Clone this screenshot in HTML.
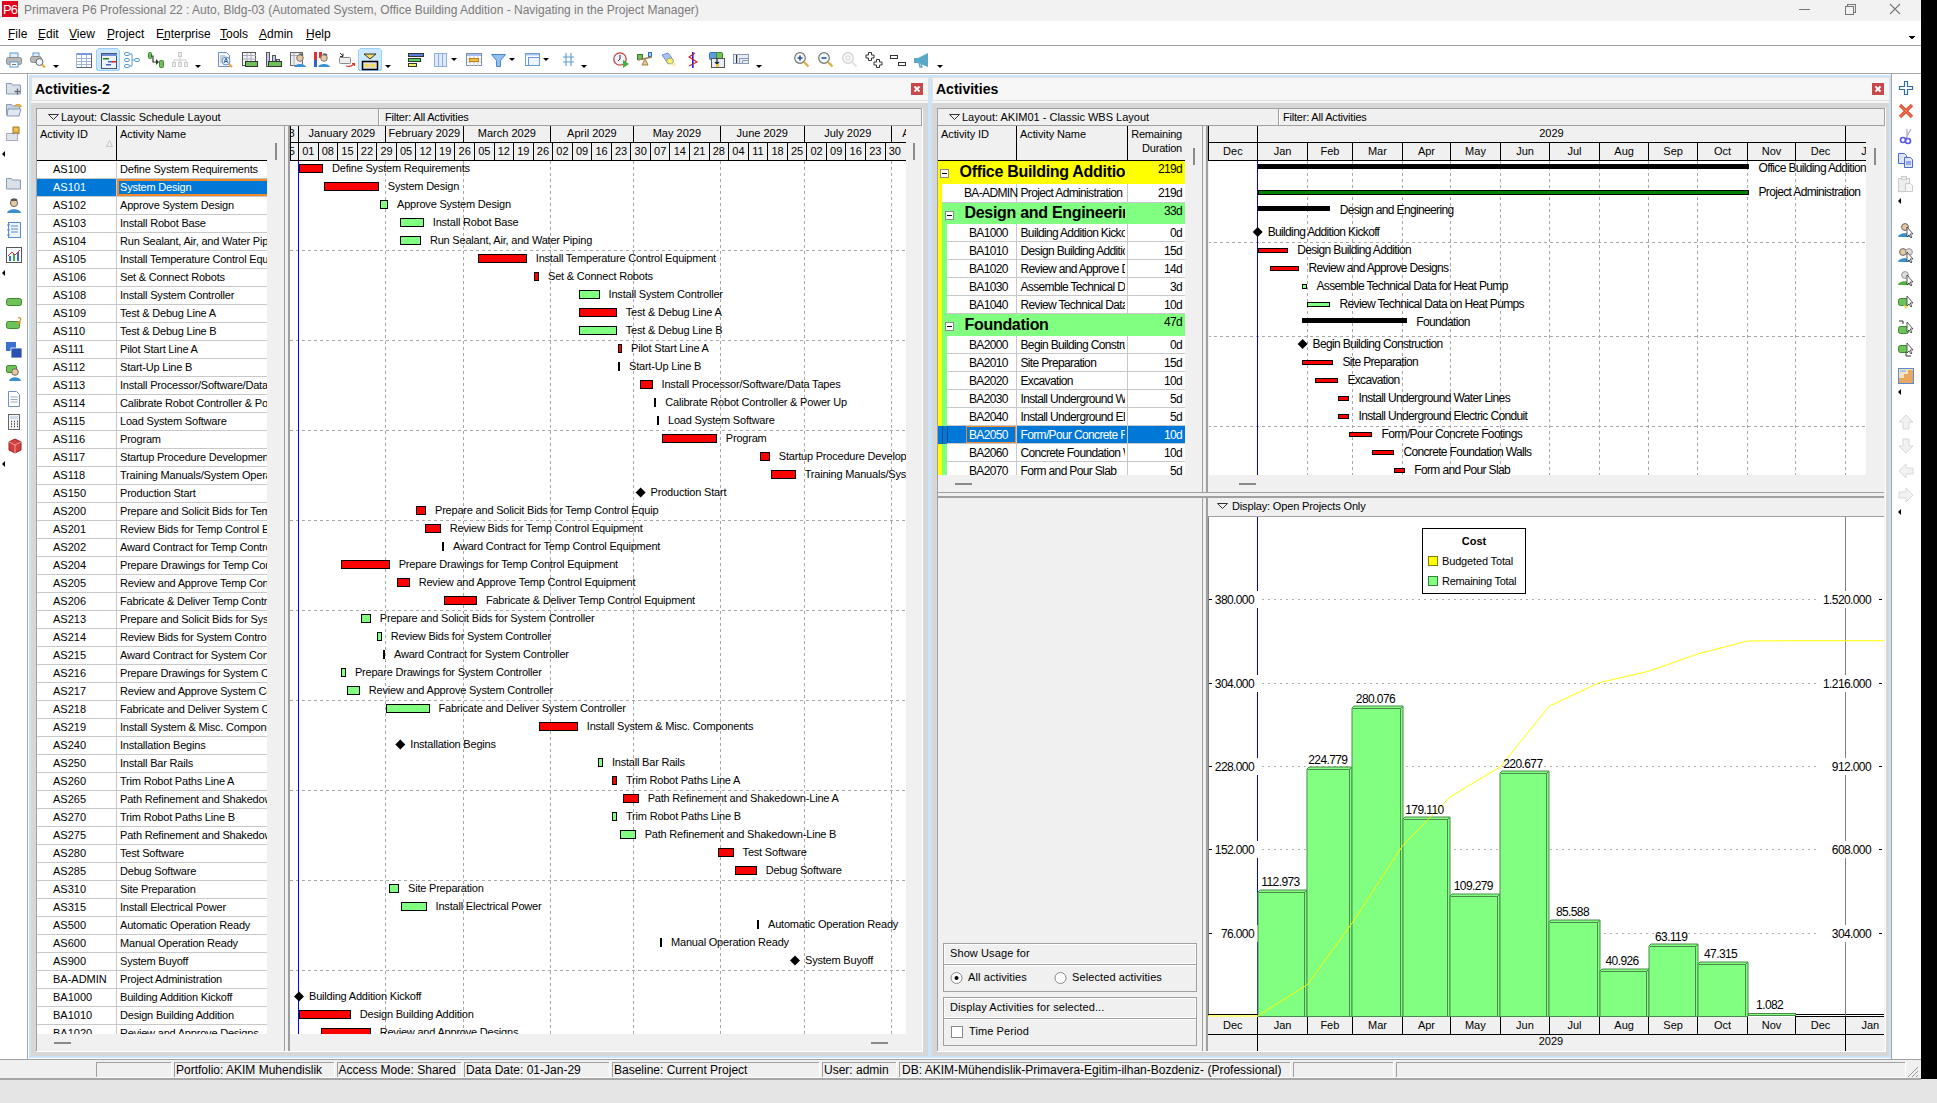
<!DOCTYPE html><html><head><meta charset="utf-8"><title>Primavera P6</title><style>
html,body{margin:0;padding:0;width:1937px;height:1103px;overflow:hidden;background:#e6e6e6;}
.lay{position:absolute;overflow:hidden;}
.lay svg{position:absolute;left:0;top:0;}
.t{position:absolute;white-space:nowrap;font-family:"Liberation Sans",sans-serif;color:#000;}
</style></head><body>
<div class="lay" style="left:0px;top:0px;width:1937px;height:1103px">
<svg width="1937" height="1103" viewBox="0 0 1937 1103" shape-rendering="crispEdges"><rect x="0" y="0" width="1937" height="1103" fill="#e6e6e6" /><rect x="1921" y="0" width="16" height="1079" fill="#000" /><rect x="0" y="0" width="1921" height="21" fill="#f2f2f2" /><rect x="0" y="21" width="1921" height="52" fill="#ffffff" /><rect x="0" y="45" width="1921" height="1" fill="#a6a6a6" /><rect x="0" y="73" width="1921" height="1" fill="#a6a6a6" /><rect x="0" y="74" width="1921" height="985" fill="#ffffff" /><rect x="27" y="74" width="1" height="985" fill="#a6a6a6" /><rect x="1891" y="74" width="1" height="985" fill="#a6a6a6" /><rect x="0" y="1059" width="1921" height="20" fill="#f0f0f0" /><rect x="0" y="1078" width="1921" height="2" fill="#a6a6a6" /><rect x="0" y="1080" width="1937" height="23" fill="#e5e5e5" /><rect x="2" y="1" width="16" height="16" fill="#e2001a" /><rect x="1799" y="9" width="11" height="1" fill="#777" /><path d="M1845.5 6.5 h8 v8 h-8 z M1847.5 6.5 v-2 h8 v8 h-2" fill="none" stroke="#777" stroke-width="1"/><path d="M1890 4 L1900 14 M1900 4 L1890 14" stroke="#777" stroke-width="1.1" shape-rendering="auto"/><rect x="8" y="39" width="6" height="1" fill="#000" /><rect x="38" y="39" width="6" height="1" fill="#000" /><rect x="70" y="39" width="7" height="1" fill="#000" /><rect x="107" y="39" width="7" height="1" fill="#000" /><rect x="163" y="39" width="6" height="1" fill="#000" /><rect x="220" y="39" width="7" height="1" fill="#000" /><rect x="259" y="39" width="7" height="1" fill="#000" /><rect x="306" y="39" width="7" height="1" fill="#000" /><path d="M1908 36 h7 l-3.5 3.5 z" fill="#000"/><rect x="30" y="76" width="899" height="981" fill="#f7f7f7" stroke="#cce4f9" stroke-width="2"/><rect x="31" y="77" width="897" height="23" fill="#f7f7f7" stroke="#e1e1e1" stroke-width="1" /><rect x="31" y="103" width="897" height="953" fill="#d7d7d7" /><rect x="911" y="83" width="12" height="12" fill="#c9484b" /><path d="M914.5 86.5 L919.5 91.5 M919.5 86.5 L914.5 91.5" stroke="#fff" stroke-width="1.8" shape-rendering="auto"/><rect x="931" y="76" width="959" height="981" fill="#f7f7f7" stroke="#cce4f9" stroke-width="2"/><rect x="932" y="77" width="957" height="23" fill="#f7f7f7" stroke="#e1e1e1" stroke-width="1" /><rect x="932" y="103" width="957" height="953" fill="#d7d7d7" /><rect x="1872" y="83" width="12" height="12" fill="#c9484b" /><path d="M1875.5 86.5 L1880.5 91.5 M1880.5 86.5 L1875.5 91.5" stroke="#fff" stroke-width="1.8" shape-rendering="auto"/><rect x="36" y="108" width="887" height="944" fill="#f0f0f0" /><rect x="36" y="108" width="886" height="1" fill="#a0a0a0" /><rect x="36" y="108" width="1" height="943" fill="#a0a0a0" /><rect x="922" y="108" width="1" height="944" fill="#ffffff" /><rect x="36" y="1051" width="887" height="1" fill="#ffffff" /><rect x="37" y="125" width="885" height="1" fill="#a0a0a0" /><rect x="378" y="109" width="1" height="16" fill="#a0a0a0" /><rect x="379" y="109" width="1" height="16" fill="#fff" /><rect x="921" y="108" width="1" height="18" fill="#a0a0a0" /><path d="M48.5 114.5 h10 L53.5 119.5 Z" fill="none" stroke="#333" stroke-width="1" shape-rendering="auto"/><rect x="37" y="126" width="230" height="34" fill="#f0f0f0" /><rect x="37" y="160" width="230" height="1" fill="#000" /><rect x="116" y="126" width="1" height="34" fill="#000" /><path d="M106.5 146.5 L109.5 140.5 L112.5 146.5 Z" fill="none" stroke="#c8c8c8" stroke-width="1" shape-rendering="auto"/><rect x="267" y="126" width="17" height="908" fill="#f0f0f0" /><rect x="275" y="143" width="2" height="17" fill="#8a8a8a" /><rect x="906" y="126" width="16" height="925" fill="#f0f0f0" /><rect x="913" y="143" width="2" height="17" fill="#8a8a8a" /><rect x="284" y="126" width="1" height="925" fill="#a0a0a0" /><rect x="285" y="126" width="3" height="925" fill="#f0f0f0" /><rect x="288" y="126" width="2" height="925" fill="#a0a0a0" /><rect x="37" y="1034" width="247" height="17" fill="#f0f0f0" /><rect x="290" y="1034" width="632" height="17" fill="#f0f0f0" /><rect x="54" y="1042" width="17" height="2" fill="#8a8a8a" /><rect x="871" y="1042" width="17" height="2" fill="#8a8a8a" /></svg>
<div class="t" style="top:1.70px;font-size:13px;line-height:16px;left:3.00px;color:#fff;letter-spacing:-0.8px;">P6</div>
<div class="t" style="top:2.70px;font-size:12px;line-height:15px;left:24.00px;color:#7b7b7b;">Primavera P6 Professional 22 : Auto, Bldg-03 (Automated System, Office Building Addition - Navigating in the Project Manager)</div>
<div class="t" style="top:26.70px;font-size:12px;line-height:15px;left:8.00px;">File</div>
<div class="t" style="top:26.70px;font-size:12px;line-height:15px;left:38.00px;">Edit</div>
<div class="t" style="top:26.70px;font-size:12px;line-height:15px;left:69.00px;">View</div>
<div class="t" style="top:26.70px;font-size:12px;line-height:15px;left:107.00px;">Project</div>
<div class="t" style="top:26.70px;font-size:12px;line-height:15px;left:156.00px;">Enterprise</div>
<div class="t" style="top:26.70px;font-size:12px;line-height:15px;left:220.00px;">Tools</div>
<div class="t" style="top:26.70px;font-size:12px;line-height:15px;left:259.00px;">Admin</div>
<div class="t" style="top:26.70px;font-size:12px;line-height:15px;left:306.00px;">Help</div>
<div class="t" style="top:80.20px;font-size:14px;line-height:18px;left:35.00px;font-weight:700;">Activities-2</div>
<div class="t" style="top:80.20px;font-size:14px;line-height:18px;left:936.00px;font-weight:700;">Activities</div>
<div class="t" style="top:110.20px;font-size:11px;line-height:14px;left:61.00px;">Layout: Classic Schedule Layout</div>
<div class="t" style="top:110.20px;font-size:11px;line-height:14px;left:385.00px;letter-spacing:-0.2px;">Filter: All Activities</div>
<div class="t" style="top:127.20px;font-size:11px;line-height:14px;left:40.00px;letter-spacing:-0.1px;">Activity ID</div>
<div class="t" style="top:127.20px;font-size:11px;line-height:14px;left:120.00px;letter-spacing:-0.1px;">Activity Name</div>
</div>
<div class="lay" style="left:37px;top:161px;width:230px;height:873px">
<svg width="230" height="873" viewBox="37 161 230 873" shape-rendering="crispEdges"><rect x="37" y="161" width="230" height="873" fill="#ffffff" /><rect x="37" y="178" width="230" height="1" fill="#c8c8c8" /><rect x="116" y="161" width="1" height="18" fill="#c8c8c8" /><rect x="37" y="179" width="230" height="17" fill="#0078d7" /><rect x="117.8" y="179.8" width="150" height="15.4" fill="none" stroke="#f0892a" stroke-width="1.6"/><rect x="37" y="196" width="230" height="1" fill="#c8c8c8" /><rect x="116" y="179" width="1" height="18" fill="#c8c8c8" /><rect x="37" y="214" width="230" height="1" fill="#c8c8c8" /><rect x="116" y="197" width="1" height="18" fill="#c8c8c8" /><rect x="37" y="232" width="230" height="1" fill="#c8c8c8" /><rect x="116" y="215" width="1" height="18" fill="#c8c8c8" /><rect x="37" y="250" width="230" height="1" fill="#c8c8c8" /><rect x="116" y="233" width="1" height="18" fill="#c8c8c8" /><rect x="37" y="268" width="230" height="1" fill="#c8c8c8" /><rect x="116" y="251" width="1" height="18" fill="#c8c8c8" /><rect x="37" y="286" width="230" height="1" fill="#c8c8c8" /><rect x="116" y="269" width="1" height="18" fill="#c8c8c8" /><rect x="37" y="304" width="230" height="1" fill="#c8c8c8" /><rect x="116" y="287" width="1" height="18" fill="#c8c8c8" /><rect x="37" y="322" width="230" height="1" fill="#c8c8c8" /><rect x="116" y="305" width="1" height="18" fill="#c8c8c8" /><rect x="37" y="340" width="230" height="1" fill="#c8c8c8" /><rect x="116" y="323" width="1" height="18" fill="#c8c8c8" /><rect x="37" y="358" width="230" height="1" fill="#c8c8c8" /><rect x="116" y="341" width="1" height="18" fill="#c8c8c8" /><rect x="37" y="376" width="230" height="1" fill="#c8c8c8" /><rect x="116" y="359" width="1" height="18" fill="#c8c8c8" /><rect x="37" y="394" width="230" height="1" fill="#c8c8c8" /><rect x="116" y="377" width="1" height="18" fill="#c8c8c8" /><rect x="37" y="412" width="230" height="1" fill="#c8c8c8" /><rect x="116" y="395" width="1" height="18" fill="#c8c8c8" /><rect x="37" y="430" width="230" height="1" fill="#c8c8c8" /><rect x="116" y="413" width="1" height="18" fill="#c8c8c8" /><rect x="37" y="448" width="230" height="1" fill="#c8c8c8" /><rect x="116" y="431" width="1" height="18" fill="#c8c8c8" /><rect x="37" y="466" width="230" height="1" fill="#c8c8c8" /><rect x="116" y="449" width="1" height="18" fill="#c8c8c8" /><rect x="37" y="484" width="230" height="1" fill="#c8c8c8" /><rect x="116" y="467" width="1" height="18" fill="#c8c8c8" /><rect x="37" y="502" width="230" height="1" fill="#c8c8c8" /><rect x="116" y="485" width="1" height="18" fill="#c8c8c8" /><rect x="37" y="520" width="230" height="1" fill="#c8c8c8" /><rect x="116" y="503" width="1" height="18" fill="#c8c8c8" /><rect x="37" y="538" width="230" height="1" fill="#c8c8c8" /><rect x="116" y="521" width="1" height="18" fill="#c8c8c8" /><rect x="37" y="556" width="230" height="1" fill="#c8c8c8" /><rect x="116" y="539" width="1" height="18" fill="#c8c8c8" /><rect x="37" y="574" width="230" height="1" fill="#c8c8c8" /><rect x="116" y="557" width="1" height="18" fill="#c8c8c8" /><rect x="37" y="592" width="230" height="1" fill="#c8c8c8" /><rect x="116" y="575" width="1" height="18" fill="#c8c8c8" /><rect x="37" y="610" width="230" height="1" fill="#c8c8c8" /><rect x="116" y="593" width="1" height="18" fill="#c8c8c8" /><rect x="37" y="628" width="230" height="1" fill="#c8c8c8" /><rect x="116" y="611" width="1" height="18" fill="#c8c8c8" /><rect x="37" y="646" width="230" height="1" fill="#c8c8c8" /><rect x="116" y="629" width="1" height="18" fill="#c8c8c8" /><rect x="37" y="664" width="230" height="1" fill="#c8c8c8" /><rect x="116" y="647" width="1" height="18" fill="#c8c8c8" /><rect x="37" y="682" width="230" height="1" fill="#c8c8c8" /><rect x="116" y="665" width="1" height="18" fill="#c8c8c8" /><rect x="37" y="700" width="230" height="1" fill="#c8c8c8" /><rect x="116" y="683" width="1" height="18" fill="#c8c8c8" /><rect x="37" y="718" width="230" height="1" fill="#c8c8c8" /><rect x="116" y="701" width="1" height="18" fill="#c8c8c8" /><rect x="37" y="736" width="230" height="1" fill="#c8c8c8" /><rect x="116" y="719" width="1" height="18" fill="#c8c8c8" /><rect x="37" y="754" width="230" height="1" fill="#c8c8c8" /><rect x="116" y="737" width="1" height="18" fill="#c8c8c8" /><rect x="37" y="772" width="230" height="1" fill="#c8c8c8" /><rect x="116" y="755" width="1" height="18" fill="#c8c8c8" /><rect x="37" y="790" width="230" height="1" fill="#c8c8c8" /><rect x="116" y="773" width="1" height="18" fill="#c8c8c8" /><rect x="37" y="808" width="230" height="1" fill="#c8c8c8" /><rect x="116" y="791" width="1" height="18" fill="#c8c8c8" /><rect x="37" y="826" width="230" height="1" fill="#c8c8c8" /><rect x="116" y="809" width="1" height="18" fill="#c8c8c8" /><rect x="37" y="844" width="230" height="1" fill="#c8c8c8" /><rect x="116" y="827" width="1" height="18" fill="#c8c8c8" /><rect x="37" y="862" width="230" height="1" fill="#c8c8c8" /><rect x="116" y="845" width="1" height="18" fill="#c8c8c8" /><rect x="37" y="880" width="230" height="1" fill="#c8c8c8" /><rect x="116" y="863" width="1" height="18" fill="#c8c8c8" /><rect x="37" y="898" width="230" height="1" fill="#c8c8c8" /><rect x="116" y="881" width="1" height="18" fill="#c8c8c8" /><rect x="37" y="916" width="230" height="1" fill="#c8c8c8" /><rect x="116" y="899" width="1" height="18" fill="#c8c8c8" /><rect x="37" y="934" width="230" height="1" fill="#c8c8c8" /><rect x="116" y="917" width="1" height="18" fill="#c8c8c8" /><rect x="37" y="952" width="230" height="1" fill="#c8c8c8" /><rect x="116" y="935" width="1" height="18" fill="#c8c8c8" /><rect x="37" y="970" width="230" height="1" fill="#c8c8c8" /><rect x="116" y="953" width="1" height="18" fill="#c8c8c8" /><rect x="37" y="988" width="230" height="1" fill="#c8c8c8" /><rect x="116" y="971" width="1" height="18" fill="#c8c8c8" /><rect x="37" y="1006" width="230" height="1" fill="#c8c8c8" /><rect x="116" y="989" width="1" height="18" fill="#c8c8c8" /><rect x="37" y="1024" width="230" height="1" fill="#c8c8c8" /><rect x="116" y="1007" width="1" height="18" fill="#c8c8c8" /><rect x="37" y="1042" width="230" height="1" fill="#c8c8c8" /><rect x="116" y="1025" width="1" height="18" fill="#c8c8c8" /></svg>
<div class="t" style="top:0.70px;font-size:11px;line-height:14px;left:16.00px;">AS100</div>
<div class="t" style="top:0.70px;font-size:11px;line-height:14px;left:83.00px;letter-spacing:-0.2px;">Define System Requirements</div>
<div class="t" style="top:18.70px;font-size:11px;line-height:14px;left:16.00px;color:#fff;">AS101</div>
<div class="t" style="top:18.70px;font-size:11px;line-height:14px;left:83.00px;color:#fff;letter-spacing:-0.2px;">System Design</div>
<div class="t" style="top:36.70px;font-size:11px;line-height:14px;left:16.00px;">AS102</div>
<div class="t" style="top:36.70px;font-size:11px;line-height:14px;left:83.00px;letter-spacing:-0.2px;">Approve System Design</div>
<div class="t" style="top:54.70px;font-size:11px;line-height:14px;left:16.00px;">AS103</div>
<div class="t" style="top:54.70px;font-size:11px;line-height:14px;left:83.00px;letter-spacing:-0.2px;">Install Robot Base</div>
<div class="t" style="top:72.70px;font-size:11px;line-height:14px;left:16.00px;">AS104</div>
<div class="t" style="top:72.70px;font-size:11px;line-height:14px;left:83.00px;letter-spacing:-0.2px;">Run Sealant, Air, and Water Piping</div>
<div class="t" style="top:90.70px;font-size:11px;line-height:14px;left:16.00px;">AS105</div>
<div class="t" style="top:90.70px;font-size:11px;line-height:14px;left:83.00px;letter-spacing:-0.2px;">Install Temperature Control Equipment</div>
<div class="t" style="top:108.70px;font-size:11px;line-height:14px;left:16.00px;">AS106</div>
<div class="t" style="top:108.70px;font-size:11px;line-height:14px;left:83.00px;letter-spacing:-0.2px;">Set &amp; Connect Robots</div>
<div class="t" style="top:126.70px;font-size:11px;line-height:14px;left:16.00px;">AS108</div>
<div class="t" style="top:126.70px;font-size:11px;line-height:14px;left:83.00px;letter-spacing:-0.2px;">Install System Controller</div>
<div class="t" style="top:144.70px;font-size:11px;line-height:14px;left:16.00px;">AS109</div>
<div class="t" style="top:144.70px;font-size:11px;line-height:14px;left:83.00px;letter-spacing:-0.2px;">Test &amp; Debug Line A</div>
<div class="t" style="top:162.70px;font-size:11px;line-height:14px;left:16.00px;">AS110</div>
<div class="t" style="top:162.70px;font-size:11px;line-height:14px;left:83.00px;letter-spacing:-0.2px;">Test &amp; Debug Line B</div>
<div class="t" style="top:180.70px;font-size:11px;line-height:14px;left:16.00px;">AS111</div>
<div class="t" style="top:180.70px;font-size:11px;line-height:14px;left:83.00px;letter-spacing:-0.2px;">Pilot Start Line A</div>
<div class="t" style="top:198.70px;font-size:11px;line-height:14px;left:16.00px;">AS112</div>
<div class="t" style="top:198.70px;font-size:11px;line-height:14px;left:83.00px;letter-spacing:-0.2px;">Start-Up Line B</div>
<div class="t" style="top:216.70px;font-size:11px;line-height:14px;left:16.00px;">AS113</div>
<div class="t" style="top:216.70px;font-size:11px;line-height:14px;left:83.00px;letter-spacing:-0.2px;">Install Processor/Software/Data Tapes</div>
<div class="t" style="top:234.70px;font-size:11px;line-height:14px;left:16.00px;">AS114</div>
<div class="t" style="top:234.70px;font-size:11px;line-height:14px;left:83.00px;letter-spacing:-0.2px;">Calibrate Robot Controller &amp; Power Up</div>
<div class="t" style="top:252.70px;font-size:11px;line-height:14px;left:16.00px;">AS115</div>
<div class="t" style="top:252.70px;font-size:11px;line-height:14px;left:83.00px;letter-spacing:-0.2px;">Load System Software</div>
<div class="t" style="top:270.70px;font-size:11px;line-height:14px;left:16.00px;">AS116</div>
<div class="t" style="top:270.70px;font-size:11px;line-height:14px;left:83.00px;letter-spacing:-0.2px;">Program</div>
<div class="t" style="top:288.70px;font-size:11px;line-height:14px;left:16.00px;">AS117</div>
<div class="t" style="top:288.70px;font-size:11px;line-height:14px;left:83.00px;letter-spacing:-0.2px;">Startup Procedure Development</div>
<div class="t" style="top:306.70px;font-size:11px;line-height:14px;left:16.00px;">AS118</div>
<div class="t" style="top:306.70px;font-size:11px;line-height:14px;left:83.00px;letter-spacing:-0.2px;">Training Manuals/System Operation</div>
<div class="t" style="top:324.70px;font-size:11px;line-height:14px;left:16.00px;">AS150</div>
<div class="t" style="top:324.70px;font-size:11px;line-height:14px;left:83.00px;letter-spacing:-0.2px;">Production Start</div>
<div class="t" style="top:342.70px;font-size:11px;line-height:14px;left:16.00px;">AS200</div>
<div class="t" style="top:342.70px;font-size:11px;line-height:14px;left:83.00px;letter-spacing:-0.2px;">Prepare and Solicit Bids for Temp Control Equip</div>
<div class="t" style="top:360.70px;font-size:11px;line-height:14px;left:16.00px;">AS201</div>
<div class="t" style="top:360.70px;font-size:11px;line-height:14px;left:83.00px;letter-spacing:-0.2px;">Review Bids for Temp Control Equipment</div>
<div class="t" style="top:378.70px;font-size:11px;line-height:14px;left:16.00px;">AS202</div>
<div class="t" style="top:378.70px;font-size:11px;line-height:14px;left:83.00px;letter-spacing:-0.2px;">Award Contract for Temp Control Equipment</div>
<div class="t" style="top:396.70px;font-size:11px;line-height:14px;left:16.00px;">AS204</div>
<div class="t" style="top:396.70px;font-size:11px;line-height:14px;left:83.00px;letter-spacing:-0.2px;">Prepare Drawings for Temp Control Equipment</div>
<div class="t" style="top:414.70px;font-size:11px;line-height:14px;left:16.00px;">AS205</div>
<div class="t" style="top:414.70px;font-size:11px;line-height:14px;left:83.00px;letter-spacing:-0.2px;">Review and Approve Temp Control Equipment</div>
<div class="t" style="top:432.70px;font-size:11px;line-height:14px;left:16.00px;">AS206</div>
<div class="t" style="top:432.70px;font-size:11px;line-height:14px;left:83.00px;letter-spacing:-0.2px;">Fabricate &amp; Deliver Temp Control Equipment</div>
<div class="t" style="top:450.70px;font-size:11px;line-height:14px;left:16.00px;">AS213</div>
<div class="t" style="top:450.70px;font-size:11px;line-height:14px;left:83.00px;letter-spacing:-0.2px;">Prepare and Solicit Bids for System Controller</div>
<div class="t" style="top:468.70px;font-size:11px;line-height:14px;left:16.00px;">AS214</div>
<div class="t" style="top:468.70px;font-size:11px;line-height:14px;left:83.00px;letter-spacing:-0.2px;">Review Bids for System Controller</div>
<div class="t" style="top:486.70px;font-size:11px;line-height:14px;left:16.00px;">AS215</div>
<div class="t" style="top:486.70px;font-size:11px;line-height:14px;left:83.00px;letter-spacing:-0.2px;">Award Contract for System Controller</div>
<div class="t" style="top:504.70px;font-size:11px;line-height:14px;left:16.00px;">AS216</div>
<div class="t" style="top:504.70px;font-size:11px;line-height:14px;left:83.00px;letter-spacing:-0.2px;">Prepare Drawings for System Controller</div>
<div class="t" style="top:522.70px;font-size:11px;line-height:14px;left:16.00px;">AS217</div>
<div class="t" style="top:522.70px;font-size:11px;line-height:14px;left:83.00px;letter-spacing:-0.2px;">Review and Approve System Controller</div>
<div class="t" style="top:540.70px;font-size:11px;line-height:14px;left:16.00px;">AS218</div>
<div class="t" style="top:540.70px;font-size:11px;line-height:14px;left:83.00px;letter-spacing:-0.2px;">Fabricate and Deliver System Controller</div>
<div class="t" style="top:558.70px;font-size:11px;line-height:14px;left:16.00px;">AS219</div>
<div class="t" style="top:558.70px;font-size:11px;line-height:14px;left:83.00px;letter-spacing:-0.2px;">Install System &amp; Misc. Components</div>
<div class="t" style="top:576.70px;font-size:11px;line-height:14px;left:16.00px;">AS240</div>
<div class="t" style="top:576.70px;font-size:11px;line-height:14px;left:83.00px;letter-spacing:-0.2px;">Installation Begins</div>
<div class="t" style="top:594.70px;font-size:11px;line-height:14px;left:16.00px;">AS250</div>
<div class="t" style="top:594.70px;font-size:11px;line-height:14px;left:83.00px;letter-spacing:-0.2px;">Install Bar Rails</div>
<div class="t" style="top:612.70px;font-size:11px;line-height:14px;left:16.00px;">AS260</div>
<div class="t" style="top:612.70px;font-size:11px;line-height:14px;left:83.00px;letter-spacing:-0.2px;">Trim Robot Paths Line A</div>
<div class="t" style="top:630.70px;font-size:11px;line-height:14px;left:16.00px;">AS265</div>
<div class="t" style="top:630.70px;font-size:11px;line-height:14px;left:83.00px;letter-spacing:-0.2px;">Path Refinement and Shakedown-Line A</div>
<div class="t" style="top:648.70px;font-size:11px;line-height:14px;left:16.00px;">AS270</div>
<div class="t" style="top:648.70px;font-size:11px;line-height:14px;left:83.00px;letter-spacing:-0.2px;">Trim Robot Paths Line B</div>
<div class="t" style="top:666.70px;font-size:11px;line-height:14px;left:16.00px;">AS275</div>
<div class="t" style="top:666.70px;font-size:11px;line-height:14px;left:83.00px;letter-spacing:-0.2px;">Path Refinement and Shakedown-Line B</div>
<div class="t" style="top:684.70px;font-size:11px;line-height:14px;left:16.00px;">AS280</div>
<div class="t" style="top:684.70px;font-size:11px;line-height:14px;left:83.00px;letter-spacing:-0.2px;">Test Software</div>
<div class="t" style="top:702.70px;font-size:11px;line-height:14px;left:16.00px;">AS285</div>
<div class="t" style="top:702.70px;font-size:11px;line-height:14px;left:83.00px;letter-spacing:-0.2px;">Debug Software</div>
<div class="t" style="top:720.70px;font-size:11px;line-height:14px;left:16.00px;">AS310</div>
<div class="t" style="top:720.70px;font-size:11px;line-height:14px;left:83.00px;letter-spacing:-0.2px;">Site Preparation</div>
<div class="t" style="top:738.70px;font-size:11px;line-height:14px;left:16.00px;">AS315</div>
<div class="t" style="top:738.70px;font-size:11px;line-height:14px;left:83.00px;letter-spacing:-0.2px;">Install Electrical Power</div>
<div class="t" style="top:756.70px;font-size:11px;line-height:14px;left:16.00px;">AS500</div>
<div class="t" style="top:756.70px;font-size:11px;line-height:14px;left:83.00px;letter-spacing:-0.2px;">Automatic Operation Ready</div>
<div class="t" style="top:774.70px;font-size:11px;line-height:14px;left:16.00px;">AS600</div>
<div class="t" style="top:774.70px;font-size:11px;line-height:14px;left:83.00px;letter-spacing:-0.2px;">Manual Operation Ready</div>
<div class="t" style="top:792.70px;font-size:11px;line-height:14px;left:16.00px;">AS900</div>
<div class="t" style="top:792.70px;font-size:11px;line-height:14px;left:83.00px;letter-spacing:-0.2px;">System Buyoff</div>
<div class="t" style="top:810.70px;font-size:11px;line-height:14px;left:16.00px;">BA-ADMIN</div>
<div class="t" style="top:810.70px;font-size:11px;line-height:14px;left:83.00px;letter-spacing:-0.2px;">Project Administration</div>
<div class="t" style="top:828.70px;font-size:11px;line-height:14px;left:16.00px;">BA1000</div>
<div class="t" style="top:828.70px;font-size:11px;line-height:14px;left:83.00px;letter-spacing:-0.2px;">Building Addition Kickoff</div>
<div class="t" style="top:846.70px;font-size:11px;line-height:14px;left:16.00px;">BA1010</div>
<div class="t" style="top:846.70px;font-size:11px;line-height:14px;left:83.00px;letter-spacing:-0.2px;">Design Building Addition</div>
<div class="t" style="top:864.70px;font-size:11px;line-height:14px;left:16.00px;">BA1020</div>
<div class="t" style="top:864.70px;font-size:11px;line-height:14px;left:83.00px;letter-spacing:-0.2px;">Review and Approve Designs</div>
</div>
<div class="lay" style="left:290px;top:126px;width:616px;height:35px">
<svg width="616" height="35" viewBox="290 126 616 35" shape-rendering="crispEdges"><rect x="290" y="126" width="616" height="35" fill="#f0f0f0" /><rect x="290" y="126" width="1" height="34" fill="#000" /><rect x="290" y="142" width="616" height="1" fill="#000" /><rect x="290" y="160" width="616" height="1" fill="#000" /><rect x="298" y="126" width="1" height="17" fill="#000" /><rect x="385" y="126" width="1" height="17" fill="#000" /><rect x="463" y="126" width="1" height="17" fill="#000" /><rect x="550" y="126" width="1" height="17" fill="#000" /><rect x="633" y="126" width="1" height="17" fill="#000" /><rect x="720" y="126" width="1" height="17" fill="#000" /><rect x="804" y="126" width="1" height="17" fill="#000" /><rect x="891" y="126" width="1" height="17" fill="#000" /><rect x="278" y="143" width="1" height="17" fill="#000" /><rect x="298" y="143" width="1" height="17" fill="#000" /><rect x="318" y="143" width="1" height="17" fill="#000" /><rect x="337" y="143" width="1" height="17" fill="#000" /><rect x="357" y="143" width="1" height="17" fill="#000" /><rect x="376" y="143" width="1" height="17" fill="#000" /><rect x="396" y="143" width="1" height="17" fill="#000" /><rect x="415" y="143" width="1" height="17" fill="#000" /><rect x="435" y="143" width="1" height="17" fill="#000" /><rect x="454" y="143" width="1" height="17" fill="#000" /><rect x="474" y="143" width="1" height="17" fill="#000" /><rect x="494" y="143" width="1" height="17" fill="#000" /><rect x="513" y="143" width="1" height="17" fill="#000" /><rect x="533" y="143" width="1" height="17" fill="#000" /><rect x="552" y="143" width="1" height="17" fill="#000" /><rect x="572" y="143" width="1" height="17" fill="#000" /><rect x="591" y="143" width="1" height="17" fill="#000" /><rect x="611" y="143" width="1" height="17" fill="#000" /><rect x="630" y="143" width="1" height="17" fill="#000" /><rect x="650" y="143" width="1" height="17" fill="#000" /><rect x="669" y="143" width="1" height="17" fill="#000" /><rect x="689" y="143" width="1" height="17" fill="#000" /><rect x="709" y="143" width="1" height="17" fill="#000" /><rect x="728" y="143" width="1" height="17" fill="#000" /><rect x="748" y="143" width="1" height="17" fill="#000" /><rect x="767" y="143" width="1" height="17" fill="#000" /><rect x="787" y="143" width="1" height="17" fill="#000" /><rect x="806" y="143" width="1" height="17" fill="#000" /><rect x="826" y="143" width="1" height="17" fill="#000" /><rect x="845" y="143" width="1" height="17" fill="#000" /><rect x="865" y="143" width="1" height="17" fill="#000" /><rect x="885" y="143" width="1" height="17" fill="#000" /></svg>
<div class="t" style="top:0.20px;font-size:11px;line-height:14px;left:-148.10px;width:400px;text-align:center;">January 2029</div>
<div class="t" style="top:0.20px;font-size:11px;line-height:14px;left:-65.65px;width:400px;text-align:center;">February 2029</div>
<div class="t" style="top:0.20px;font-size:11px;line-height:14px;left:16.90px;width:400px;text-align:center;">March 2029</div>
<div class="t" style="top:0.20px;font-size:11px;line-height:14px;left:101.90px;width:400px;text-align:center;">April 2029</div>
<div class="t" style="top:0.20px;font-size:11px;line-height:14px;left:186.85px;width:400px;text-align:center;">May 2029</div>
<div class="t" style="top:0.20px;font-size:11px;line-height:14px;left:272.30px;width:400px;text-align:center;">June 2029</div>
<div class="t" style="top:0.20px;font-size:11px;line-height:14px;left:357.80px;width:400px;text-align:center;">July 2029</div>
<div class="t" style="top:0.20px;font-size:11px;line-height:14px;left:443.15px;width:400px;text-align:center;">August 2029</div>
<div class="t" style="top:17.70px;font-size:11px;line-height:14px;left:-181.70px;width:400px;text-align:center;">01</div>
<div class="t" style="top:17.70px;font-size:11px;line-height:14px;left:-162.15px;width:400px;text-align:center;">08</div>
<div class="t" style="top:17.70px;font-size:11px;line-height:14px;left:-142.60px;width:400px;text-align:center;">15</div>
<div class="t" style="top:17.70px;font-size:11px;line-height:14px;left:-123.05px;width:400px;text-align:center;">22</div>
<div class="t" style="top:17.70px;font-size:11px;line-height:14px;left:-103.50px;width:400px;text-align:center;">29</div>
<div class="t" style="top:17.70px;font-size:11px;line-height:14px;left:-83.95px;width:400px;text-align:center;">05</div>
<div class="t" style="top:17.70px;font-size:11px;line-height:14px;left:-64.40px;width:400px;text-align:center;">12</div>
<div class="t" style="top:17.70px;font-size:11px;line-height:14px;left:-44.85px;width:400px;text-align:center;">19</div>
<div class="t" style="top:17.70px;font-size:11px;line-height:14px;left:-25.30px;width:400px;text-align:center;">26</div>
<div class="t" style="top:17.70px;font-size:11px;line-height:14px;left:-5.75px;width:400px;text-align:center;">05</div>
<div class="t" style="top:17.70px;font-size:11px;line-height:14px;left:13.80px;width:400px;text-align:center;">12</div>
<div class="t" style="top:17.70px;font-size:11px;line-height:14px;left:33.35px;width:400px;text-align:center;">19</div>
<div class="t" style="top:17.70px;font-size:11px;line-height:14px;left:52.90px;width:400px;text-align:center;">26</div>
<div class="t" style="top:17.70px;font-size:11px;line-height:14px;left:72.45px;width:400px;text-align:center;">02</div>
<div class="t" style="top:17.70px;font-size:11px;line-height:14px;left:92.00px;width:400px;text-align:center;">09</div>
<div class="t" style="top:17.70px;font-size:11px;line-height:14px;left:111.55px;width:400px;text-align:center;">16</div>
<div class="t" style="top:17.70px;font-size:11px;line-height:14px;left:131.10px;width:400px;text-align:center;">23</div>
<div class="t" style="top:17.70px;font-size:11px;line-height:14px;left:150.65px;width:400px;text-align:center;">30</div>
<div class="t" style="top:17.70px;font-size:11px;line-height:14px;left:170.20px;width:400px;text-align:center;">07</div>
<div class="t" style="top:17.70px;font-size:11px;line-height:14px;left:189.75px;width:400px;text-align:center;">14</div>
<div class="t" style="top:17.70px;font-size:11px;line-height:14px;left:209.30px;width:400px;text-align:center;">21</div>
<div class="t" style="top:17.70px;font-size:11px;line-height:14px;left:228.85px;width:400px;text-align:center;">28</div>
<div class="t" style="top:17.70px;font-size:11px;line-height:14px;left:248.40px;width:400px;text-align:center;">04</div>
<div class="t" style="top:17.70px;font-size:11px;line-height:14px;left:267.95px;width:400px;text-align:center;">11</div>
<div class="t" style="top:17.70px;font-size:11px;line-height:14px;left:287.50px;width:400px;text-align:center;">18</div>
<div class="t" style="top:17.70px;font-size:11px;line-height:14px;left:307.05px;width:400px;text-align:center;">25</div>
<div class="t" style="top:17.70px;font-size:11px;line-height:14px;left:326.60px;width:400px;text-align:center;">02</div>
<div class="t" style="top:17.70px;font-size:11px;line-height:14px;left:346.15px;width:400px;text-align:center;">09</div>
<div class="t" style="top:17.70px;font-size:11px;line-height:14px;left:365.70px;width:400px;text-align:center;">16</div>
<div class="t" style="top:17.70px;font-size:11px;line-height:14px;left:385.25px;width:400px;text-align:center;">23</div>
<div class="t" style="top:17.70px;font-size:11px;line-height:14px;left:404.80px;width:400px;text-align:center;">30</div>
<div class="t" style="top:17.70px;font-size:11px;line-height:14px;left:-201.30px;width:400px;text-align:center;">25</div>
<div class="t" style="top:0.20px;font-size:11px;line-height:14px;left:-234.50px;width:400px;text-align:center;">December 2028</div>
</div>
<div class="lay" style="left:290px;top:161px;width:616px;height:873px">
<svg width="616" height="873" viewBox="290 161 616 873" shape-rendering="crispEdges"><rect x="290" y="161" width="616" height="873" fill="#ffffff" /><line x1="385.5" y1="161" x2="385.5" y2="1034" stroke="#a8a8a8" stroke-width="1" stroke-dasharray="3,3"/><line x1="463.5" y1="161" x2="463.5" y2="1034" stroke="#a8a8a8" stroke-width="1" stroke-dasharray="3,3"/><line x1="550.5" y1="161" x2="550.5" y2="1034" stroke="#a8a8a8" stroke-width="1" stroke-dasharray="3,3"/><line x1="633.5" y1="161" x2="633.5" y2="1034" stroke="#a8a8a8" stroke-width="1" stroke-dasharray="3,3"/><line x1="720.5" y1="161" x2="720.5" y2="1034" stroke="#a8a8a8" stroke-width="1" stroke-dasharray="3,3"/><line x1="804.5" y1="161" x2="804.5" y2="1034" stroke="#a8a8a8" stroke-width="1" stroke-dasharray="3,3"/><line x1="891.5" y1="161" x2="891.5" y2="1034" stroke="#a8a8a8" stroke-width="1" stroke-dasharray="3,3"/><line x1="290" y1="250.5" x2="906" y2="250.5" stroke="#a8a8a8" stroke-width="1" stroke-dasharray="3,3"/><line x1="290" y1="340.5" x2="906" y2="340.5" stroke="#a8a8a8" stroke-width="1" stroke-dasharray="3,3"/><line x1="290" y1="430.5" x2="906" y2="430.5" stroke="#a8a8a8" stroke-width="1" stroke-dasharray="3,3"/><line x1="290" y1="520.5" x2="906" y2="520.5" stroke="#a8a8a8" stroke-width="1" stroke-dasharray="3,3"/><line x1="290" y1="610.5" x2="906" y2="610.5" stroke="#a8a8a8" stroke-width="1" stroke-dasharray="3,3"/><line x1="290" y1="700.5" x2="906" y2="700.5" stroke="#a8a8a8" stroke-width="1" stroke-dasharray="3,3"/><line x1="290" y1="790.5" x2="906" y2="790.5" stroke="#a8a8a8" stroke-width="1" stroke-dasharray="3,3"/><line x1="290" y1="880.5" x2="906" y2="880.5" stroke="#a8a8a8" stroke-width="1" stroke-dasharray="3,3"/><line x1="290" y1="970.5" x2="906" y2="970.5" stroke="#a8a8a8" stroke-width="1" stroke-dasharray="3,3"/><rect x="298" y="161" width="1" height="873" fill="#0000ff" /><rect x="299.5" y="164.5" width="23" height="8" fill="#ff0000" stroke="#000" stroke-width="1"/><rect x="324.5" y="182.5" width="54" height="8" fill="#ff0000" stroke="#000" stroke-width="1"/><rect x="380.5" y="200.5" width="7" height="8" fill="#80ff80" stroke="#000" stroke-width="1"/><rect x="400.5" y="218.5" width="23" height="8" fill="#80ff80" stroke="#000" stroke-width="1"/><rect x="400.5" y="236.5" width="20" height="8" fill="#80ff80" stroke="#000" stroke-width="1"/><rect x="478.5" y="254.5" width="48" height="8" fill="#ff0000" stroke="#000" stroke-width="1"/><rect x="534.5" y="272.5" width="4" height="8" fill="#ff0000" stroke="#000" stroke-width="1"/><rect x="579.5" y="290.5" width="20" height="8" fill="#80ff80" stroke="#000" stroke-width="1"/><rect x="579.5" y="308.5" width="37" height="8" fill="#ff0000" stroke="#000" stroke-width="1"/><rect x="579.5" y="326.5" width="37" height="8" fill="#80ff80" stroke="#000" stroke-width="1"/><rect x="618.5" y="344.5" width="3" height="8" fill="#ff0000" stroke="#000" stroke-width="1"/><rect x="618" y="362" width="2" height="9" fill="#000" /><rect x="640.5" y="380.5" width="12" height="8" fill="#ff0000" stroke="#000" stroke-width="1"/><rect x="654" y="398" width="2" height="9" fill="#000" /><rect x="657" y="416" width="2" height="9" fill="#000" /><rect x="662.5" y="434.5" width="54" height="8" fill="#ff0000" stroke="#000" stroke-width="1"/><rect x="760.5" y="452.5" width="9" height="8" fill="#ff0000" stroke="#000" stroke-width="1"/><rect x="771.5" y="470.5" width="24" height="8" fill="#ff0000" stroke="#000" stroke-width="1"/><path d="M640.6 487.5 L645.6 492.5 L640.6 497.5 L635.6 492.5 Z" fill="#000" shape-rendering="auto"/><rect x="416.5" y="506.5" width="9" height="8" fill="#ff0000" stroke="#000" stroke-width="1"/><rect x="425.5" y="524.5" width="15" height="8" fill="#ff0000" stroke="#000" stroke-width="1"/><rect x="442" y="542" width="2" height="9" fill="#000" /><rect x="341.5" y="560.5" width="48" height="8" fill="#ff0000" stroke="#000" stroke-width="1"/><rect x="397.5" y="578.5" width="12" height="8" fill="#ff0000" stroke="#000" stroke-width="1"/><rect x="444.5" y="596.5" width="32" height="8" fill="#ff0000" stroke="#000" stroke-width="1"/><rect x="361.5" y="614.5" width="9" height="8" fill="#80ff80" stroke="#000" stroke-width="1"/><rect x="377.5" y="632.5" width="4" height="8" fill="#80ff80" stroke="#000" stroke-width="1"/><rect x="383" y="650" width="2" height="9" fill="#000" /><rect x="341.5" y="668.5" width="4" height="8" fill="#80ff80" stroke="#000" stroke-width="1"/><rect x="347.5" y="686.5" width="12" height="8" fill="#80ff80" stroke="#000" stroke-width="1"/><rect x="386.5" y="704.5" width="43" height="8" fill="#80ff80" stroke="#000" stroke-width="1"/><rect x="539.5" y="722.5" width="38" height="8" fill="#ff0000" stroke="#000" stroke-width="1"/><path d="M400.3 739.5 L405.3 744.5 L400.3 749.5 L395.3 744.5 Z" fill="#000" shape-rendering="auto"/><rect x="598.5" y="758.5" width="4" height="8" fill="#80ff80" stroke="#000" stroke-width="1"/><rect x="612.5" y="776.5" width="4" height="8" fill="#ff0000" stroke="#000" stroke-width="1"/><rect x="623.5" y="794.5" width="15" height="8" fill="#ff0000" stroke="#000" stroke-width="1"/><rect x="612.5" y="812.5" width="4" height="8" fill="#80ff80" stroke="#000" stroke-width="1"/><rect x="620.5" y="830.5" width="15" height="8" fill="#80ff80" stroke="#000" stroke-width="1"/><rect x="718.5" y="848.5" width="15" height="8" fill="#ff0000" stroke="#000" stroke-width="1"/><rect x="735.5" y="866.5" width="21" height="8" fill="#ff0000" stroke="#000" stroke-width="1"/><rect x="389.5" y="884.5" width="9" height="8" fill="#80ff80" stroke="#000" stroke-width="1"/><rect x="401.5" y="902.5" width="25" height="8" fill="#80ff80" stroke="#000" stroke-width="1"/><rect x="757" y="920" width="2" height="9" fill="#000" /><rect x="660" y="938" width="2" height="9" fill="#000" /><path d="M795 955.5 L800 960.5 L795 965.5 L790 960.5 Z" fill="#000" shape-rendering="auto"/><path d="M299 991.5 L304 996.5 L299 1001.5 L294 996.5 Z" fill="#000" shape-rendering="auto"/><rect x="299.5" y="1010.5" width="51" height="8" fill="#ff0000" stroke="#000" stroke-width="1"/><rect x="321.5" y="1028.5" width="49" height="8" fill="#ff0000" stroke="#000" stroke-width="1"/></svg>
<div class="t" style="top:-0.30px;font-size:11px;line-height:14px;left:42.00px;letter-spacing:-0.2px;">Define System Requirements</div>
<div class="t" style="top:17.70px;font-size:11px;line-height:14px;left:97.80px;letter-spacing:-0.2px;">System Design</div>
<div class="t" style="top:35.70px;font-size:11px;line-height:14px;left:107.00px;letter-spacing:-0.2px;">Approve System Design</div>
<div class="t" style="top:53.70px;font-size:11px;line-height:14px;left:142.80px;letter-spacing:-0.2px;">Install Robot Base</div>
<div class="t" style="top:71.70px;font-size:11px;line-height:14px;left:139.90px;letter-spacing:-0.2px;">Run Sealant, Air, and Water Piping</div>
<div class="t" style="top:89.70px;font-size:11px;line-height:14px;left:245.80px;letter-spacing:-0.2px;">Install Temperature Control Equipment</div>
<div class="t" style="top:107.70px;font-size:11px;line-height:14px;left:258.00px;letter-spacing:-0.2px;">Set &amp; Connect Robots</div>
<div class="t" style="top:125.70px;font-size:11px;line-height:14px;left:318.60px;letter-spacing:-0.2px;">Install System Controller</div>
<div class="t" style="top:143.70px;font-size:11px;line-height:14px;left:335.80px;letter-spacing:-0.2px;">Test &amp; Debug Line A</div>
<div class="t" style="top:161.70px;font-size:11px;line-height:14px;left:335.80px;letter-spacing:-0.2px;">Test &amp; Debug Line B</div>
<div class="t" style="top:179.70px;font-size:11px;line-height:14px;left:341.00px;letter-spacing:-0.2px;">Pilot Start Line A</div>
<div class="t" style="top:197.70px;font-size:11px;line-height:14px;left:339.00px;letter-spacing:-0.2px;">Start-Up Line B</div>
<div class="t" style="top:215.70px;font-size:11px;line-height:14px;left:371.60px;letter-spacing:-0.2px;">Install Processor/Software/Data Tapes</div>
<div class="t" style="top:233.70px;font-size:11px;line-height:14px;left:375.30px;letter-spacing:-0.2px;">Calibrate Robot Controller &amp; Power Up</div>
<div class="t" style="top:251.70px;font-size:11px;line-height:14px;left:378.00px;letter-spacing:-0.2px;">Load System Software</div>
<div class="t" style="top:269.70px;font-size:11px;line-height:14px;left:435.80px;letter-spacing:-0.2px;">Program</div>
<div class="t" style="top:287.70px;font-size:11px;line-height:14px;left:488.80px;letter-spacing:-0.2px;">Startup Procedure Development</div>
<div class="t" style="top:305.70px;font-size:11px;line-height:14px;left:514.70px;letter-spacing:-0.2px;">Training Manuals/System Operation</div>
<div class="t" style="top:323.70px;font-size:11px;line-height:14px;left:360.60px;letter-spacing:-0.2px;">Production Start</div>
<div class="t" style="top:341.70px;font-size:11px;line-height:14px;left:145.00px;letter-spacing:-0.2px;">Prepare and Solicit Bids for Temp Control Equip</div>
<div class="t" style="top:359.70px;font-size:11px;line-height:14px;left:159.80px;letter-spacing:-0.2px;">Review Bids for Temp Control Equipment</div>
<div class="t" style="top:377.70px;font-size:11px;line-height:14px;left:163.00px;letter-spacing:-0.2px;">Award Contract for Temp Control Equipment</div>
<div class="t" style="top:395.70px;font-size:11px;line-height:14px;left:108.70px;letter-spacing:-0.2px;">Prepare Drawings for Temp Control Equipment</div>
<div class="t" style="top:413.70px;font-size:11px;line-height:14px;left:128.70px;letter-spacing:-0.2px;">Review and Approve Temp Control Equipment</div>
<div class="t" style="top:431.70px;font-size:11px;line-height:14px;left:195.90px;letter-spacing:-0.2px;">Fabricate &amp; Deliver Temp Control Equipment</div>
<div class="t" style="top:449.70px;font-size:11px;line-height:14px;left:89.80px;letter-spacing:-0.2px;">Prepare and Solicit Bids for System Controller</div>
<div class="t" style="top:467.70px;font-size:11px;line-height:14px;left:100.70px;letter-spacing:-0.2px;">Review Bids for System Controller</div>
<div class="t" style="top:485.70px;font-size:11px;line-height:14px;left:104.00px;letter-spacing:-0.2px;">Award Contract for System Controller</div>
<div class="t" style="top:503.70px;font-size:11px;line-height:14px;left:64.90px;letter-spacing:-0.2px;">Prepare Drawings for System Controller</div>
<div class="t" style="top:521.70px;font-size:11px;line-height:14px;left:78.80px;letter-spacing:-0.2px;">Review and Approve System Controller</div>
<div class="t" style="top:539.70px;font-size:11px;line-height:14px;left:148.50px;letter-spacing:-0.2px;">Fabricate and Deliver System Controller</div>
<div class="t" style="top:557.70px;font-size:11px;line-height:14px;left:296.80px;letter-spacing:-0.2px;">Install System &amp; Misc. Components</div>
<div class="t" style="top:575.70px;font-size:11px;line-height:14px;left:120.30px;letter-spacing:-0.2px;">Installation Begins</div>
<div class="t" style="top:593.70px;font-size:11px;line-height:14px;left:321.90px;letter-spacing:-0.2px;">Install Bar Rails</div>
<div class="t" style="top:611.70px;font-size:11px;line-height:14px;left:335.90px;letter-spacing:-0.2px;">Trim Robot Paths Line A</div>
<div class="t" style="top:629.70px;font-size:11px;line-height:14px;left:357.70px;letter-spacing:-0.2px;">Path Refinement and Shakedown-Line A</div>
<div class="t" style="top:647.70px;font-size:11px;line-height:14px;left:336.00px;letter-spacing:-0.2px;">Trim Robot Paths Line B</div>
<div class="t" style="top:665.70px;font-size:11px;line-height:14px;left:354.70px;letter-spacing:-0.2px;">Path Refinement and Shakedown-Line B</div>
<div class="t" style="top:683.70px;font-size:11px;line-height:14px;left:452.60px;letter-spacing:-0.2px;">Test Software</div>
<div class="t" style="top:701.70px;font-size:11px;line-height:14px;left:475.70px;letter-spacing:-0.2px;">Debug Software</div>
<div class="t" style="top:719.70px;font-size:11px;line-height:14px;left:118.00px;letter-spacing:-0.2px;">Site Preparation</div>
<div class="t" style="top:737.70px;font-size:11px;line-height:14px;left:145.60px;letter-spacing:-0.2px;">Install Electrical Power</div>
<div class="t" style="top:755.70px;font-size:11px;line-height:14px;left:478.00px;letter-spacing:-0.2px;">Automatic Operation Ready</div>
<div class="t" style="top:773.70px;font-size:11px;line-height:14px;left:381.00px;letter-spacing:-0.2px;">Manual Operation Ready</div>
<div class="t" style="top:791.70px;font-size:11px;line-height:14px;left:515.00px;letter-spacing:-0.2px;">System Buyoff</div>
<div class="t" style="top:827.70px;font-size:11px;line-height:14px;left:19.00px;letter-spacing:-0.2px;">Building Addition Kickoff</div>
<div class="t" style="top:845.70px;font-size:11px;line-height:14px;left:69.80px;letter-spacing:-0.2px;">Design Building Addition</div>
<div class="t" style="top:863.70px;font-size:11px;line-height:14px;left:89.70px;letter-spacing:-0.2px;">Review and Approve Designs</div>
</div>
<div class="lay" style="left:0px;top:0px;width:1937px;height:1103px">
<svg width="1937" height="1103" viewBox="0 0 1937 1103" shape-rendering="crispEdges"><rect x="937" y="108" width="949" height="944" fill="#f0f0f0" /><rect x="937" y="108" width="948" height="1" fill="#a0a0a0" /><rect x="937" y="108" width="1" height="943" fill="#a0a0a0" /><rect x="1885" y="108" width="1" height="944" fill="#ffffff" /><rect x="937" y="1051" width="949" height="1" fill="#ffffff" /><rect x="938" y="125" width="946" height="1" fill="#a0a0a0" /><rect x="1278" y="109" width="1" height="16" fill="#a0a0a0" /><rect x="1279" y="109" width="1" height="16" fill="#fff" /><rect x="1884" y="108" width="1" height="18" fill="#a0a0a0" /><path d="M949.5 114.5 h10 L954.5 119.5 Z" fill="none" stroke="#333" stroke-width="1" shape-rendering="auto"/><rect x="938" y="126" width="247" height="34" fill="#f0f0f0" /><rect x="938" y="160" width="247" height="1" fill="#000" /><rect x="1016" y="126" width="1" height="34" fill="#000" /><rect x="1127" y="126" width="1" height="34" fill="#000" /><rect x="1185" y="126" width="17" height="349" fill="#f0f0f0" /><rect x="1193" y="148" width="2" height="17" fill="#8a8a8a" /><rect x="1202" y="126" width="1" height="366" fill="#a0a0a0" /><rect x="1203" y="126" width="3" height="366" fill="#f0f0f0" /><rect x="1206" y="126" width="2" height="366" fill="#a0a0a0" /><rect x="1866" y="126" width="18" height="349" fill="#f0f0f0" /><rect x="1874" y="148" width="2" height="17" fill="#8a8a8a" /><rect x="938" y="475" width="264" height="17" fill="#f0f0f0" /><rect x="1208" y="475" width="676" height="17" fill="#f0f0f0" /><rect x="955" y="483" width="17" height="2" fill="#8a8a8a" /><rect x="1239" y="483" width="17" height="2" fill="#8a8a8a" /><rect x="938" y="492" width="946" height="1" fill="#a0a0a0" /><rect x="938" y="496" width="946" height="2" fill="#a0a0a0" /><rect x="938" y="498" width="264" height="553" fill="#f0f0f0" /><rect x="1202" y="498" width="1" height="553" fill="#a0a0a0" /><rect x="1206" y="498" width="2" height="553" fill="#a0a0a0" /></svg>
<div class="t" style="top:110.20px;font-size:11px;line-height:14px;left:962.00px;">Layout: AKIM01 - Classic WBS Layout</div>
<div class="t" style="top:110.20px;font-size:11px;line-height:14px;left:1283.00px;letter-spacing:-0.2px;">Filter: All Activities</div>
<div class="t" style="top:127.20px;font-size:11px;line-height:14px;left:941.00px;letter-spacing:-0.1px;">Activity ID</div>
<div class="t" style="top:127.20px;font-size:11px;line-height:14px;left:1020.00px;letter-spacing:-0.1px;">Activity Name</div>
<div class="t" style="top:127.20px;font-size:11px;line-height:14px;left:782.00px;width:400px;text-align:right;letter-spacing:-0.2px;">Remaining</div>
<div class="t" style="top:141.20px;font-size:11px;line-height:14px;left:782.00px;width:400px;text-align:right;letter-spacing:-0.2px;">Duration</div>
</div>
<div class="lay" style="left:938px;top:161px;width:247px;height:314px">
<svg width="247" height="314" viewBox="938 161 247 314" shape-rendering="crispEdges"><rect x="938" y="161" width="247" height="314" fill="#ffffff" /><rect x="938" y="161" width="247" height="23" fill="#ffff00" /><rect x="940.5" y="169.5" width="8" height="8" fill="#fff" stroke="#8c8c8c" stroke-width="1" /><rect x="942" y="173" width="5" height="1" fill="#000" /><rect x="938" y="184" width="247" height="19" fill="#ffffff" /><rect x="938" y="184" width="4" height="19" fill="#ffff00" /><rect x="942" y="202" width="243" height="1" fill="#c8c8c8" /><rect x="1016" y="184" width="1" height="18" fill="#c8c8c8" /><rect x="1127" y="184" width="1" height="18" fill="#c8c8c8" /><rect x="938" y="203" width="247" height="21" fill="#80ff80" /><rect x="938" y="203" width="4" height="21" fill="#ffff00" /><rect x="945.5" y="211.5" width="8" height="8" fill="#fff" stroke="#8c8c8c" stroke-width="1" /><rect x="947" y="215" width="5" height="1" fill="#000" /><rect x="938" y="224" width="247" height="18" fill="#ffffff" /><rect x="938" y="224" width="4" height="18" fill="#ffff00" /><rect x="942" y="224" width="5" height="18" fill="#80ff80" /><rect x="947" y="241" width="238" height="1" fill="#c8c8c8" /><rect x="1016" y="224" width="1" height="18" fill="#c8c8c8" /><rect x="1127" y="224" width="1" height="18" fill="#c8c8c8" /><rect x="938" y="242" width="247" height="18" fill="#ffffff" /><rect x="938" y="242" width="4" height="18" fill="#ffff00" /><rect x="942" y="242" width="5" height="18" fill="#80ff80" /><rect x="947" y="259" width="238" height="1" fill="#c8c8c8" /><rect x="1016" y="242" width="1" height="18" fill="#c8c8c8" /><rect x="1127" y="242" width="1" height="18" fill="#c8c8c8" /><rect x="938" y="260" width="247" height="18" fill="#ffffff" /><rect x="938" y="260" width="4" height="18" fill="#ffff00" /><rect x="942" y="260" width="5" height="18" fill="#80ff80" /><rect x="947" y="277" width="238" height="1" fill="#c8c8c8" /><rect x="1016" y="260" width="1" height="18" fill="#c8c8c8" /><rect x="1127" y="260" width="1" height="18" fill="#c8c8c8" /><rect x="938" y="278" width="247" height="18" fill="#ffffff" /><rect x="938" y="278" width="4" height="18" fill="#ffff00" /><rect x="942" y="278" width="5" height="18" fill="#80ff80" /><rect x="947" y="295" width="238" height="1" fill="#c8c8c8" /><rect x="1016" y="278" width="1" height="18" fill="#c8c8c8" /><rect x="1127" y="278" width="1" height="18" fill="#c8c8c8" /><rect x="938" y="296" width="247" height="18" fill="#ffffff" /><rect x="938" y="296" width="4" height="18" fill="#ffff00" /><rect x="942" y="296" width="5" height="18" fill="#80ff80" /><rect x="947" y="313" width="238" height="1" fill="#c8c8c8" /><rect x="1016" y="296" width="1" height="18" fill="#c8c8c8" /><rect x="1127" y="296" width="1" height="18" fill="#c8c8c8" /><rect x="938" y="314" width="247" height="22" fill="#80ff80" /><rect x="938" y="314" width="4" height="22" fill="#ffff00" /><rect x="945.5" y="322.5" width="8" height="8" fill="#fff" stroke="#8c8c8c" stroke-width="1" /><rect x="947" y="326" width="5" height="1" fill="#000" /><rect x="938" y="336" width="247" height="18" fill="#ffffff" /><rect x="938" y="336" width="4" height="18" fill="#ffff00" /><rect x="942" y="336" width="5" height="18" fill="#80ff80" /><rect x="947" y="353" width="238" height="1" fill="#c8c8c8" /><rect x="1016" y="336" width="1" height="18" fill="#c8c8c8" /><rect x="1127" y="336" width="1" height="18" fill="#c8c8c8" /><rect x="938" y="354" width="247" height="18" fill="#ffffff" /><rect x="938" y="354" width="4" height="18" fill="#ffff00" /><rect x="942" y="354" width="5" height="18" fill="#80ff80" /><rect x="947" y="371" width="238" height="1" fill="#c8c8c8" /><rect x="1016" y="354" width="1" height="18" fill="#c8c8c8" /><rect x="1127" y="354" width="1" height="18" fill="#c8c8c8" /><rect x="938" y="372" width="247" height="18" fill="#ffffff" /><rect x="938" y="372" width="4" height="18" fill="#ffff00" /><rect x="942" y="372" width="5" height="18" fill="#80ff80" /><rect x="947" y="389" width="238" height="1" fill="#c8c8c8" /><rect x="1016" y="372" width="1" height="18" fill="#c8c8c8" /><rect x="1127" y="372" width="1" height="18" fill="#c8c8c8" /><rect x="938" y="390" width="247" height="18" fill="#ffffff" /><rect x="938" y="390" width="4" height="18" fill="#ffff00" /><rect x="942" y="390" width="5" height="18" fill="#80ff80" /><rect x="947" y="407" width="238" height="1" fill="#c8c8c8" /><rect x="1016" y="390" width="1" height="18" fill="#c8c8c8" /><rect x="1127" y="390" width="1" height="18" fill="#c8c8c8" /><rect x="938" y="408" width="247" height="18" fill="#ffffff" /><rect x="938" y="408" width="4" height="18" fill="#ffff00" /><rect x="942" y="408" width="5" height="18" fill="#80ff80" /><rect x="947" y="425" width="238" height="1" fill="#c8c8c8" /><rect x="1016" y="408" width="1" height="18" fill="#c8c8c8" /><rect x="1127" y="408" width="1" height="18" fill="#c8c8c8" /><rect x="938" y="426" width="247" height="18" fill="#0078d7" /><rect x="942" y="426" width="1" height="18" fill="#1c4f80" /><rect x="947" y="426" width="1" height="18" fill="#1c4f80" /><rect x="947" y="443" width="238" height="1" fill="#c8c8c8" /><rect x="1016" y="426" width="1" height="18" fill="#c8c8c8" /><rect x="1127" y="426" width="1" height="18" fill="#c8c8c8" /><rect x="966.5" y="426.5" width="49" height="16" fill="none" stroke="#f0892a" stroke-width="1.2"/><rect x="938" y="444" width="247" height="18" fill="#ffffff" /><rect x="938" y="444" width="4" height="18" fill="#ffff00" /><rect x="942" y="444" width="5" height="18" fill="#80ff80" /><rect x="947" y="461" width="238" height="1" fill="#c8c8c8" /><rect x="1016" y="444" width="1" height="18" fill="#c8c8c8" /><rect x="1127" y="444" width="1" height="18" fill="#c8c8c8" /><rect x="938" y="462" width="247" height="18" fill="#ffffff" /><rect x="938" y="462" width="4" height="18" fill="#ffff00" /><rect x="942" y="462" width="5" height="18" fill="#80ff80" /><rect x="947" y="479" width="238" height="1" fill="#c8c8c8" /><rect x="1016" y="462" width="1" height="18" fill="#c8c8c8" /><rect x="1127" y="462" width="1" height="18" fill="#c8c8c8" /></svg>
<div class="t" style="top:24.70px;font-size:12px;line-height:15px;left:26.00px;letter-spacing:-0.65px;">BA-ADMIN</div>
<div class="t" style="top:64.70px;font-size:12px;line-height:15px;left:31.00px;letter-spacing:-0.65px;">BA1000</div>
<div class="t" style="top:82.70px;font-size:12px;line-height:15px;left:31.00px;letter-spacing:-0.65px;">BA1010</div>
<div class="t" style="top:100.70px;font-size:12px;line-height:15px;left:31.00px;letter-spacing:-0.65px;">BA1020</div>
<div class="t" style="top:118.70px;font-size:12px;line-height:15px;left:31.00px;letter-spacing:-0.65px;">BA1030</div>
<div class="t" style="top:136.70px;font-size:12px;line-height:15px;left:31.00px;letter-spacing:-0.65px;">BA1040</div>
<div class="t" style="top:176.70px;font-size:12px;line-height:15px;left:31.00px;letter-spacing:-0.65px;">BA2000</div>
<div class="t" style="top:194.70px;font-size:12px;line-height:15px;left:31.00px;letter-spacing:-0.65px;">BA2010</div>
<div class="t" style="top:212.70px;font-size:12px;line-height:15px;left:31.00px;letter-spacing:-0.65px;">BA2020</div>
<div class="t" style="top:230.70px;font-size:12px;line-height:15px;left:31.00px;letter-spacing:-0.65px;">BA2030</div>
<div class="t" style="top:248.70px;font-size:12px;line-height:15px;left:31.00px;letter-spacing:-0.65px;">BA2040</div>
<div class="t" style="top:266.70px;font-size:12px;line-height:15px;left:31.00px;color:#fff;letter-spacing:-0.65px;">BA2050</div>
<div class="t" style="top:284.70px;font-size:12px;line-height:15px;left:31.00px;letter-spacing:-0.65px;">BA2060</div>
<div class="t" style="top:302.70px;font-size:12px;line-height:15px;left:31.00px;letter-spacing:-0.65px;">BA2070</div>
</div>
<div class="lay" style="left:1017px;top:161px;width:108px;height:314px">
<div class="t" style="top:24.70px;font-size:12px;line-height:15px;left:3.50px;letter-spacing:-0.65px;">Project Administration</div>
<div class="t" style="top:64.70px;font-size:12px;line-height:15px;left:3.50px;letter-spacing:-0.65px;">Building Addition Kickoff</div>
<div class="t" style="top:82.70px;font-size:12px;line-height:15px;left:3.50px;letter-spacing:-0.65px;">Design Building Addition</div>
<div class="t" style="top:100.70px;font-size:12px;line-height:15px;left:3.50px;letter-spacing:-0.65px;">Review and Approve Designs</div>
<div class="t" style="top:118.70px;font-size:12px;line-height:15px;left:3.50px;letter-spacing:-0.65px;">Assemble Technical Data for Heat Pump</div>
<div class="t" style="top:136.70px;font-size:12px;line-height:15px;left:3.50px;letter-spacing:-0.65px;">Review Technical Data on Heat Pumps</div>
<div class="t" style="top:176.70px;font-size:12px;line-height:15px;left:3.50px;letter-spacing:-0.65px;">Begin Building Construction</div>
<div class="t" style="top:194.70px;font-size:12px;line-height:15px;left:3.50px;letter-spacing:-0.65px;">Site Preparation</div>
<div class="t" style="top:212.70px;font-size:12px;line-height:15px;left:3.50px;letter-spacing:-0.65px;">Excavation</div>
<div class="t" style="top:230.70px;font-size:12px;line-height:15px;left:3.50px;letter-spacing:-0.65px;">Install Underground Water Lines</div>
<div class="t" style="top:248.70px;font-size:12px;line-height:15px;left:3.50px;letter-spacing:-0.65px;">Install Underground Electric Conduit</div>
<div class="t" style="top:266.70px;font-size:12px;line-height:15px;left:3.50px;color:#fff;letter-spacing:-0.65px;">Form/Pour Concrete Footings</div>
<div class="t" style="top:284.70px;font-size:12px;line-height:15px;left:3.50px;letter-spacing:-0.65px;">Concrete Foundation Walls</div>
<div class="t" style="top:302.70px;font-size:12px;line-height:15px;left:3.50px;letter-spacing:-0.65px;">Form and Pour Slab</div>
</div>
<div class="lay" style="left:947px;top:161px;width:178px;height:314px">
<div class="t" style="top:1.20px;font-size:16px;line-height:20px;left:12.50px;font-weight:700;letter-spacing:-0.3px;">Office Building Addition</div>
<div class="t" style="top:42.20px;font-size:16px;line-height:20px;left:17.50px;font-weight:700;letter-spacing:-0.3px;">Design and Engineering</div>
<div class="t" style="top:153.70px;font-size:16px;line-height:20px;left:17.50px;font-weight:700;letter-spacing:-0.3px;">Foundation</div>
</div>
<div class="lay" style="left:1128px;top:161px;width:57px;height:314px">
<svg width="57" height="314" viewBox="1128 161 57 314" shape-rendering="crispEdges"><rect x="1127" y="161" width="1" height="314" fill="#c8c8c8" /></svg>
<div class="t" style="top:1.20px;font-size:12px;line-height:15px;left:-346.00px;width:400px;text-align:right;letter-spacing:-0.65px;">219d</div>
<div class="t" style="top:24.70px;font-size:12px;line-height:15px;left:-346.00px;width:400px;text-align:right;letter-spacing:-0.65px;">219d</div>
<div class="t" style="top:43.20px;font-size:12px;line-height:15px;left:-346.00px;width:400px;text-align:right;letter-spacing:-0.65px;">33d</div>
<div class="t" style="top:64.70px;font-size:12px;line-height:15px;left:-346.00px;width:400px;text-align:right;letter-spacing:-0.65px;">0d</div>
<div class="t" style="top:82.70px;font-size:12px;line-height:15px;left:-346.00px;width:400px;text-align:right;letter-spacing:-0.65px;">15d</div>
<div class="t" style="top:100.70px;font-size:12px;line-height:15px;left:-346.00px;width:400px;text-align:right;letter-spacing:-0.65px;">14d</div>
<div class="t" style="top:118.70px;font-size:12px;line-height:15px;left:-346.00px;width:400px;text-align:right;letter-spacing:-0.65px;">3d</div>
<div class="t" style="top:136.70px;font-size:12px;line-height:15px;left:-346.00px;width:400px;text-align:right;letter-spacing:-0.65px;">10d</div>
<div class="t" style="top:154.20px;font-size:12px;line-height:15px;left:-346.00px;width:400px;text-align:right;letter-spacing:-0.65px;">47d</div>
<div class="t" style="top:176.70px;font-size:12px;line-height:15px;left:-346.00px;width:400px;text-align:right;letter-spacing:-0.65px;">0d</div>
<div class="t" style="top:194.70px;font-size:12px;line-height:15px;left:-346.00px;width:400px;text-align:right;letter-spacing:-0.65px;">15d</div>
<div class="t" style="top:212.70px;font-size:12px;line-height:15px;left:-346.00px;width:400px;text-align:right;letter-spacing:-0.65px;">10d</div>
<div class="t" style="top:230.70px;font-size:12px;line-height:15px;left:-346.00px;width:400px;text-align:right;letter-spacing:-0.65px;">5d</div>
<div class="t" style="top:248.70px;font-size:12px;line-height:15px;left:-346.00px;width:400px;text-align:right;letter-spacing:-0.65px;">5d</div>
<div class="t" style="top:266.70px;font-size:12px;line-height:15px;left:-346.00px;width:400px;text-align:right;color:#fff;letter-spacing:-0.65px;">10d</div>
<div class="t" style="top:284.70px;font-size:12px;line-height:15px;left:-346.00px;width:400px;text-align:right;letter-spacing:-0.65px;">10d</div>
<div class="t" style="top:302.70px;font-size:12px;line-height:15px;left:-346.00px;width:400px;text-align:right;letter-spacing:-0.65px;">5d</div>
</div>
<div class="lay" style="left:1208px;top:126px;width:658px;height:35px">
<svg width="658" height="35" viewBox="1208 126 658 35" shape-rendering="crispEdges"><rect x="1208" y="126" width="658" height="35" fill="#f0f0f0" /><rect x="1208" y="126" width="1" height="35" fill="#000" /><rect x="1208" y="142" width="658" height="1" fill="#000" /><rect x="1208" y="160" width="658" height="1" fill="#000" /><rect x="1208" y="142" width="1" height="18" fill="#000" /><rect x="1257" y="142" width="1" height="18" fill="#000" /><rect x="1307" y="142" width="1" height="18" fill="#000" /><rect x="1352" y="142" width="1" height="18" fill="#000" /><rect x="1402" y="142" width="1" height="18" fill="#000" /><rect x="1450" y="142" width="1" height="18" fill="#000" /><rect x="1500" y="142" width="1" height="18" fill="#000" /><rect x="1549" y="142" width="1" height="18" fill="#000" /><rect x="1599" y="142" width="1" height="18" fill="#000" /><rect x="1648" y="142" width="1" height="18" fill="#000" /><rect x="1697" y="142" width="1" height="18" fill="#000" /><rect x="1747" y="142" width="1" height="18" fill="#000" /><rect x="1795" y="142" width="1" height="18" fill="#000" /><rect x="1845" y="142" width="1" height="18" fill="#000" /><rect x="1257" y="126" width="1" height="17" fill="#000" /><rect x="1845" y="126" width="1" height="17" fill="#000" /></svg>
<div class="t" style="top:17.70px;font-size:11px;line-height:14px;left:-175.15px;width:400px;text-align:center;">Dec</div>
<div class="t" style="top:17.70px;font-size:11px;line-height:14px;left:-125.40px;width:400px;text-align:center;">Jan</div>
<div class="t" style="top:17.70px;font-size:11px;line-height:14px;left:-78.05px;width:400px;text-align:center;">Feb</div>
<div class="t" style="top:17.70px;font-size:11px;line-height:14px;left:-30.60px;width:400px;text-align:center;">Mar</div>
<div class="t" style="top:17.70px;font-size:11px;line-height:14px;left:18.45px;width:400px;text-align:center;">Apr</div>
<div class="t" style="top:17.70px;font-size:11px;line-height:14px;left:67.50px;width:400px;text-align:center;">May</div>
<div class="t" style="top:17.70px;font-size:11px;line-height:14px;left:117.00px;width:400px;text-align:center;">Jun</div>
<div class="t" style="top:17.70px;font-size:11px;line-height:14px;left:166.50px;width:400px;text-align:center;">Jul</div>
<div class="t" style="top:17.70px;font-size:11px;line-height:14px;left:216.10px;width:400px;text-align:center;">Aug</div>
<div class="t" style="top:17.70px;font-size:11px;line-height:14px;left:265.15px;width:400px;text-align:center;">Sep</div>
<div class="t" style="top:17.70px;font-size:11px;line-height:14px;left:314.60px;width:400px;text-align:center;">Oct</div>
<div class="t" style="top:17.70px;font-size:11px;line-height:14px;left:363.60px;width:400px;text-align:center;">Nov</div>
<div class="t" style="top:17.70px;font-size:11px;line-height:14px;left:412.50px;width:400px;text-align:center;">Dec</div>
<div class="t" style="top:17.70px;font-size:11px;line-height:14px;left:462.20px;width:400px;text-align:center;">Jan</div>
<div class="t" style="top:-0.30px;font-size:11px;line-height:14px;left:143.50px;width:400px;text-align:center;">2029</div>
</div>
<div class="lay" style="left:1209px;top:161px;width:657px;height:314px">
<svg width="657" height="314" viewBox="1209 161 657 314" shape-rendering="crispEdges"><rect x="1208" y="161" width="658" height="314" fill="#ffffff" /><line x1="1307.5" y1="161" x2="1307.5" y2="475" stroke="#a8a8a8" stroke-width="1" stroke-dasharray="3,3"/><line x1="1352.5" y1="161" x2="1352.5" y2="475" stroke="#a8a8a8" stroke-width="1" stroke-dasharray="3,3"/><line x1="1402.5" y1="161" x2="1402.5" y2="475" stroke="#a8a8a8" stroke-width="1" stroke-dasharray="3,3"/><line x1="1450.5" y1="161" x2="1450.5" y2="475" stroke="#a8a8a8" stroke-width="1" stroke-dasharray="3,3"/><line x1="1500.5" y1="161" x2="1500.5" y2="475" stroke="#a8a8a8" stroke-width="1" stroke-dasharray="3,3"/><line x1="1549.5" y1="161" x2="1549.5" y2="475" stroke="#a8a8a8" stroke-width="1" stroke-dasharray="3,3"/><line x1="1599.5" y1="161" x2="1599.5" y2="475" stroke="#a8a8a8" stroke-width="1" stroke-dasharray="3,3"/><line x1="1648.5" y1="161" x2="1648.5" y2="475" stroke="#a8a8a8" stroke-width="1" stroke-dasharray="3,3"/><line x1="1697.5" y1="161" x2="1697.5" y2="475" stroke="#a8a8a8" stroke-width="1" stroke-dasharray="3,3"/><line x1="1747.5" y1="161" x2="1747.5" y2="475" stroke="#a8a8a8" stroke-width="1" stroke-dasharray="3,3"/><line x1="1795.5" y1="161" x2="1795.5" y2="475" stroke="#a8a8a8" stroke-width="1" stroke-dasharray="3,3"/><line x1="1845.5" y1="161" x2="1845.5" y2="475" stroke="#a8a8a8" stroke-width="1" stroke-dasharray="3,3"/><line x1="1208" y1="242.5" x2="1866" y2="242.5" stroke="#a8a8a8" stroke-width="1" stroke-dasharray="3,3"/><line x1="1208" y1="336.5" x2="1866" y2="336.5" stroke="#a8a8a8" stroke-width="1" stroke-dasharray="3,3"/><line x1="1208" y1="426.5" x2="1866" y2="426.5" stroke="#a8a8a8" stroke-width="1" stroke-dasharray="3,3"/><rect x="1257" y="161" width="1" height="314" fill="#0000ff" /><rect x="1258" y="164" width="491" height="5" fill="#000" /><rect x="1258.5" y="190.5" width="490" height="4" fill="#008000" stroke="#000" stroke-width="1"/><rect x="1258" y="206" width="72" height="5" fill="#000" /><path d="M1257.7 227 L1262.7 232 L1257.7 237 L1252.7 232 Z" fill="#000" shape-rendering="auto"/><rect x="1258.5" y="248.5" width="29" height="4" fill="#ff0000" stroke="#000" stroke-width="1"/><rect x="1270.5" y="266.5" width="28" height="4" fill="#ff0000" stroke="#000" stroke-width="1"/><rect x="1302.5" y="284.5" width="4" height="4" fill="#80ff80" stroke="#000" stroke-width="1"/><rect x="1307.5" y="302.5" width="22" height="4" fill="#80ff80" stroke="#000" stroke-width="1"/><rect x="1302" y="318" width="105" height="5" fill="#000" /><path d="M1302.6 339 L1307.6 344 L1302.6 349 L1297.6 344 Z" fill="#000" shape-rendering="auto"/><rect x="1302.5" y="360.5" width="30" height="4" fill="#ff0000" stroke="#000" stroke-width="1"/><rect x="1315.5" y="378.5" width="22" height="4" fill="#ff0000" stroke="#000" stroke-width="1"/><rect x="1338.5" y="396.5" width="10" height="4" fill="#ff0000" stroke="#000" stroke-width="1"/><rect x="1338.5" y="414.5" width="10" height="4" fill="#ff0000" stroke="#000" stroke-width="1"/><rect x="1349.5" y="432.5" width="22" height="4" fill="#ff0000" stroke="#000" stroke-width="1"/><rect x="1372.5" y="450.5" width="21" height="4" fill="#ff0000" stroke="#000" stroke-width="1"/><rect x="1394.5" y="468.5" width="10" height="4" fill="#ff0000" stroke="#000" stroke-width="1"/></svg>
<div class="t" style="top:-0.30px;font-size:12px;line-height:15px;left:549.50px;letter-spacing:-0.65px;">Office Building Addition</div>
<div class="t" style="top:23.70px;font-size:12px;line-height:15px;left:549.50px;letter-spacing:-0.65px;">Project Administration</div>
<div class="t" style="top:41.70px;font-size:12px;line-height:15px;left:130.70px;letter-spacing:-0.65px;">Design and Engineering</div>
<div class="t" style="top:63.70px;font-size:12px;line-height:15px;left:58.70px;letter-spacing:-0.65px;">Building Addition Kickoff</div>
<div class="t" style="top:81.70px;font-size:12px;line-height:15px;left:88.20px;letter-spacing:-0.65px;">Design Building Addition</div>
<div class="t" style="top:99.70px;font-size:12px;line-height:15px;left:99.50px;letter-spacing:-0.65px;">Review and Approve Designs</div>
<div class="t" style="top:117.70px;font-size:12px;line-height:15px;left:107.50px;letter-spacing:-0.65px;">Assemble Technical Data for Heat Pump</div>
<div class="t" style="top:135.70px;font-size:12px;line-height:15px;left:130.50px;letter-spacing:-0.65px;">Review Technical Data on Heat Pumps</div>
<div class="t" style="top:153.70px;font-size:12px;line-height:15px;left:207.30px;letter-spacing:-0.65px;">Foundation</div>
<div class="t" style="top:175.70px;font-size:12px;line-height:15px;left:103.60px;letter-spacing:-0.65px;">Begin Building Construction</div>
<div class="t" style="top:193.70px;font-size:12px;line-height:15px;left:133.40px;letter-spacing:-0.65px;">Site Preparation</div>
<div class="t" style="top:211.70px;font-size:12px;line-height:15px;left:138.40px;letter-spacing:-0.65px;">Excavation</div>
<div class="t" style="top:229.70px;font-size:12px;line-height:15px;left:149.50px;letter-spacing:-0.65px;">Install Underground Water Lines</div>
<div class="t" style="top:247.70px;font-size:12px;line-height:15px;left:149.50px;letter-spacing:-0.65px;">Install Underground Electric Conduit</div>
<div class="t" style="top:265.70px;font-size:12px;line-height:15px;left:172.50px;letter-spacing:-0.65px;">Form/Pour Concrete Footings</div>
<div class="t" style="top:283.70px;font-size:12px;line-height:15px;left:194.40px;letter-spacing:-0.65px;">Concrete Foundation Walls</div>
<div class="t" style="top:301.70px;font-size:12px;line-height:15px;left:205.30px;letter-spacing:-0.65px;">Form and Pour Slab</div>
</div>
<div class="lay" style="left:0px;top:0px;width:1937px;height:1103px">
<svg width="1937" height="1103" viewBox="0 0 1937 1103" shape-rendering="crispEdges"><rect x="943" y="943" width="254" height="49" fill="#f0f0f0" /><rect x="943.5" y="943.5" width="253" height="48" fill="none" stroke="#a0a0a0"/><rect x="944.5" y="944.5" width="251" height="19" fill="none" stroke="#ffffff"/><rect x="944" y="964" width="252" height="1" fill="#a0a0a0" /><rect x="944" y="965" width="252" height="1" fill="#ffffff" /><rect x="943" y="997" width="254" height="49" fill="#f0f0f0" /><rect x="943.5" y="997.5" width="253" height="48" fill="none" stroke="#a0a0a0"/><rect x="944.5" y="998.5" width="251" height="19" fill="none" stroke="#ffffff"/><rect x="944" y="1018" width="252" height="1" fill="#a0a0a0" /><rect x="944" y="1019" width="252" height="1" fill="#ffffff" /><circle cx="956.5" cy="978" r="5.5" fill="#fff" stroke="#8a8a8a" stroke-width="1" shape-rendering="auto"/><circle cx="1060.5" cy="978" r="5.5" fill="#fff" stroke="#8a8a8a" stroke-width="1" shape-rendering="auto"/><circle cx="956.5" cy="978" r="2" fill="#000" shape-rendering="auto"/><rect x="951.5" y="1026.5" width="11" height="11" fill="#fff" stroke="#8a8a8a" stroke-width="1" /><rect x="1208" y="498" width="676" height="18" fill="#f0f0f0" /><rect x="1208" y="516" width="676" height="1" fill="#a0a0a0" /><path d="M1217.5 503.5 h10 L1222.5 508.5 Z" fill="none" stroke="#333" stroke-width="1" shape-rendering="auto"/></svg>
<div class="t" style="top:946.20px;font-size:11px;line-height:14px;left:950.00px;letter-spacing:0.1px;">Show Usage for</div>
<div class="t" style="top:1000.20px;font-size:11px;line-height:14px;left:950.00px;letter-spacing:0.1px;">Display Activities for selected...</div>
<div class="t" style="top:970.20px;font-size:11px;line-height:14px;left:968.00px;letter-spacing:0.1px;">All activities</div>
<div class="t" style="top:970.20px;font-size:11px;line-height:14px;left:1072.00px;letter-spacing:0.1px;">Selected activities</div>
<div class="t" style="top:1024.20px;font-size:11px;line-height:14px;left:969.00px;letter-spacing:0.1px;">Time Period</div>
<div class="t" style="top:499.20px;font-size:11px;line-height:14px;left:1232.00px;letter-spacing:-0.15px;">Display: Open Projects Only</div>
</div>
<div class="lay" style="left:1208px;top:517px;width:676px;height:534px">
<svg width="676" height="534" viewBox="1208 517 676 534" shape-rendering="crispEdges"><rect x="1208" y="517" width="676" height="534" fill="#ffffff" /><rect x="1208" y="517" width="1" height="499" fill="#808080" /><rect x="1208" y="1014" width="676" height="1" fill="#000" /><line x1="1262" y1="599.5" x2="1820" y2="599.5" stroke="#b0b0b0" stroke-width="1" stroke-dasharray="2,4"/><rect x="1209" y="599" width="3" height="1" fill="#000" /><rect x="1879" y="599" width="3" height="1" fill="#000" /><line x1="1262" y1="683.5" x2="1820" y2="683.5" stroke="#b0b0b0" stroke-width="1" stroke-dasharray="2,4"/><rect x="1209" y="683" width="3" height="1" fill="#000" /><rect x="1879" y="683" width="3" height="1" fill="#000" /><line x1="1262" y1="766.5" x2="1820" y2="766.5" stroke="#b0b0b0" stroke-width="1" stroke-dasharray="2,4"/><rect x="1209" y="766" width="3" height="1" fill="#000" /><rect x="1879" y="766" width="3" height="1" fill="#000" /><line x1="1262" y1="849.5" x2="1820" y2="849.5" stroke="#b0b0b0" stroke-width="1" stroke-dasharray="2,4"/><rect x="1209" y="849" width="3" height="1" fill="#000" /><rect x="1879" y="849" width="3" height="1" fill="#000" /><line x1="1262" y1="933.5" x2="1820" y2="933.5" stroke="#b0b0b0" stroke-width="1" stroke-dasharray="2,4"/><rect x="1209" y="933" width="3" height="1" fill="#000" /><rect x="1879" y="933" width="3" height="1" fill="#000" /><rect x="1257" y="517" width="1" height="499" fill="#0000ff" /><rect x="1845" y="517" width="1" height="499" fill="#808080" /><rect x="1213" y="591" width="46" height="17" fill="#ffffff" /><rect x="1822" y="591" width="50" height="17" fill="#ffffff" /><rect x="1213" y="675" width="46" height="17" fill="#ffffff" /><rect x="1822" y="675" width="50" height="17" fill="#ffffff" /><rect x="1213" y="758" width="46" height="17" fill="#ffffff" /><rect x="1822" y="758" width="50" height="17" fill="#ffffff" /><rect x="1213" y="841" width="46" height="17" fill="#ffffff" /><rect x="1822" y="841" width="50" height="17" fill="#ffffff" /><rect x="1213" y="925" width="46" height="17" fill="#ffffff" /><rect x="1822" y="925" width="50" height="17" fill="#ffffff" /><path d="M1258 892 L1260 890 L1307 890 L1307 1016.5 L1258 1016.5 Z" fill="#80ff80" stroke="#4a8a4a" stroke-width="1" shape-rendering="auto"/><path d="M1258.5 892.5 L1304.5 892.5 L1304.5 1016" fill="none" stroke="#4a8a4a" stroke-width="1"/><path d="M1304.5 892.5 L1306.5 890.5" fill="none" stroke="#4a8a4a" stroke-width="1" shape-rendering="auto"/><path d="M1307 769 L1309 767 L1352 767 L1352 1016.5 L1307 1016.5 Z" fill="#80ff80" stroke="#4a8a4a" stroke-width="1" shape-rendering="auto"/><path d="M1307.5 769.5 L1349.5 769.5 L1349.5 1016" fill="none" stroke="#4a8a4a" stroke-width="1"/><path d="M1349.5 769.5 L1351.5 767.5" fill="none" stroke="#4a8a4a" stroke-width="1" shape-rendering="auto"/><path d="M1352 708 L1354 706 L1403 706 L1403 1016.5 L1352 1016.5 Z" fill="#80ff80" stroke="#4a8a4a" stroke-width="1" shape-rendering="auto"/><path d="M1352.5 708.5 L1400.5 708.5 L1400.5 1016" fill="none" stroke="#4a8a4a" stroke-width="1"/><path d="M1400.5 708.5 L1402.5 706.5" fill="none" stroke="#4a8a4a" stroke-width="1" shape-rendering="auto"/><path d="M1403 819 L1405 817 L1450 817 L1450 1016.5 L1403 1016.5 Z" fill="#80ff80" stroke="#4a8a4a" stroke-width="1" shape-rendering="auto"/><path d="M1403.5 819.5 L1447.5 819.5 L1447.5 1016" fill="none" stroke="#4a8a4a" stroke-width="1"/><path d="M1447.5 819.5 L1449.5 817.5" fill="none" stroke="#4a8a4a" stroke-width="1" shape-rendering="auto"/><path d="M1450 896 L1452 894 L1500 894 L1500 1016.5 L1450 1016.5 Z" fill="#80ff80" stroke="#4a8a4a" stroke-width="1" shape-rendering="auto"/><path d="M1450.5 896.5 L1497.5 896.5 L1497.5 1016" fill="none" stroke="#4a8a4a" stroke-width="1"/><path d="M1497.5 896.5 L1499.5 894.5" fill="none" stroke="#4a8a4a" stroke-width="1" shape-rendering="auto"/><path d="M1500 773 L1502 771 L1549 771 L1549 1016.5 L1500 1016.5 Z" fill="#80ff80" stroke="#4a8a4a" stroke-width="1" shape-rendering="auto"/><path d="M1500.5 773.5 L1546.5 773.5 L1546.5 1016" fill="none" stroke="#4a8a4a" stroke-width="1"/><path d="M1546.5 773.5 L1548.5 771.5" fill="none" stroke="#4a8a4a" stroke-width="1" shape-rendering="auto"/><path d="M1549 922 L1551 920 L1600 920 L1600 1016.5 L1549 1016.5 Z" fill="#80ff80" stroke="#4a8a4a" stroke-width="1" shape-rendering="auto"/><path d="M1549.5 922.5 L1597.5 922.5 L1597.5 1016" fill="none" stroke="#4a8a4a" stroke-width="1"/><path d="M1597.5 922.5 L1599.5 920.5" fill="none" stroke="#4a8a4a" stroke-width="1" shape-rendering="auto"/><path d="M1600 971 L1602 969 L1649 969 L1649 1016.5 L1600 1016.5 Z" fill="#80ff80" stroke="#4a8a4a" stroke-width="1" shape-rendering="auto"/><path d="M1600.5 971.5 L1646.5 971.5 L1646.5 1016" fill="none" stroke="#4a8a4a" stroke-width="1"/><path d="M1646.5 971.5 L1648.5 969.5" fill="none" stroke="#4a8a4a" stroke-width="1" shape-rendering="auto"/><path d="M1649 946 L1651 944 L1698 944 L1698 1016.5 L1649 1016.5 Z" fill="#80ff80" stroke="#4a8a4a" stroke-width="1" shape-rendering="auto"/><path d="M1649.5 946.5 L1695.5 946.5 L1695.5 1016" fill="none" stroke="#4a8a4a" stroke-width="1"/><path d="M1695.5 946.5 L1697.5 944.5" fill="none" stroke="#4a8a4a" stroke-width="1" shape-rendering="auto"/><path d="M1698 964 L1700 962 L1748 962 L1748 1016.5 L1698 1016.5 Z" fill="#80ff80" stroke="#4a8a4a" stroke-width="1" shape-rendering="auto"/><path d="M1698.5 964.5 L1745.5 964.5 L1745.5 1016" fill="none" stroke="#4a8a4a" stroke-width="1"/><path d="M1745.5 964.5 L1747.5 962.5" fill="none" stroke="#4a8a4a" stroke-width="1" shape-rendering="auto"/><rect x="1748.5" y="1013.5" width="47" height="2" fill="#80ff80" stroke="#4a8a4a"/><polyline points="1208.0,1016.0 1257.6,1016.0 1307.4,984.6 1352.3,922.8 1402.6,845.9 1450.3,796.7 1500.4,766.7 1549.4,706.1 1599.5,682.6 1648.7,671.3 1697.6,654.0 1747.6,641.0 1795.6,640.7 1884.0,640.7" fill="none" stroke="#ffff00" stroke-width="1" shape-rendering="auto"/><rect x="1422.5" y="528.5" width="103" height="65" fill="#fff" stroke="#000" stroke-width="1" /><rect x="1428.5" y="556.5" width="9" height="9" fill="#ffff00" stroke="#808000" stroke-width="1" /><rect x="1428.5" y="576.5" width="9" height="9" fill="#80ff80" stroke="#3c7c3c" stroke-width="1" /><rect x="1795" y="1016" width="89" height="1" fill="#000" /><rect x="1208" y="1017" width="676" height="34" fill="#f0f0f0" /><rect x="1208" y="1034" width="676" height="1" fill="#000" /><rect x="1257" y="1017" width="1" height="17" fill="#000" /><rect x="1307" y="1017" width="1" height="17" fill="#000" /><rect x="1352" y="1017" width="1" height="17" fill="#000" /><rect x="1402" y="1017" width="1" height="17" fill="#000" /><rect x="1450" y="1017" width="1" height="17" fill="#000" /><rect x="1500" y="1017" width="1" height="17" fill="#000" /><rect x="1549" y="1017" width="1" height="17" fill="#000" /><rect x="1599" y="1017" width="1" height="17" fill="#000" /><rect x="1648" y="1017" width="1" height="17" fill="#000" /><rect x="1697" y="1017" width="1" height="17" fill="#000" /><rect x="1747" y="1017" width="1" height="17" fill="#000" /><rect x="1795" y="1017" width="1" height="17" fill="#000" /><rect x="1845" y="1017" width="1" height="17" fill="#000" /><rect x="1257" y="1034" width="1" height="17" fill="#000" /><rect x="1845" y="1034" width="1" height="17" fill="#000" /></svg>
<div class="t" style="top:75.50px;font-size:12px;line-height:15px;left:-354.00px;width:400px;text-align:right;letter-spacing:-0.6px;">380.000</div>
<div class="t" style="top:75.50px;font-size:12px;line-height:15px;left:263.00px;width:400px;text-align:right;letter-spacing:-0.6px;">1.520.000</div>
<div class="t" style="top:159.50px;font-size:12px;line-height:15px;left:-354.00px;width:400px;text-align:right;letter-spacing:-0.6px;">304.000</div>
<div class="t" style="top:159.50px;font-size:12px;line-height:15px;left:263.00px;width:400px;text-align:right;letter-spacing:-0.6px;">1.216.000</div>
<div class="t" style="top:242.50px;font-size:12px;line-height:15px;left:-354.00px;width:400px;text-align:right;letter-spacing:-0.6px;">228.000</div>
<div class="t" style="top:242.50px;font-size:12px;line-height:15px;left:263.00px;width:400px;text-align:right;letter-spacing:-0.6px;">912.000</div>
<div class="t" style="top:325.50px;font-size:12px;line-height:15px;left:-354.00px;width:400px;text-align:right;letter-spacing:-0.6px;">152.000</div>
<div class="t" style="top:325.50px;font-size:12px;line-height:15px;left:263.00px;width:400px;text-align:right;letter-spacing:-0.6px;">608.000</div>
<div class="t" style="top:409.50px;font-size:12px;line-height:15px;left:-354.00px;width:400px;text-align:right;letter-spacing:-0.6px;">76.000</div>
<div class="t" style="top:409.50px;font-size:12px;line-height:15px;left:263.00px;width:400px;text-align:right;letter-spacing:-0.6px;">304.000</div>
<div class="t" style="top:358.31px;font-size:12px;line-height:15px;left:-127.50px;width:400px;text-align:center;letter-spacing:-0.6px;">112.973</div>
<div class="t" style="top:235.61px;font-size:12px;line-height:15px;left:-80.15px;width:400px;text-align:center;letter-spacing:-0.6px;">224.779</div>
<div class="t" style="top:174.92px;font-size:12px;line-height:15px;left:-32.55px;width:400px;text-align:center;letter-spacing:-0.6px;">280.076</div>
<div class="t" style="top:285.73px;font-size:12px;line-height:15px;left:16.45px;width:400px;text-align:center;letter-spacing:-0.6px;">179.110</div>
<div class="t" style="top:362.37px;font-size:12px;line-height:15px;left:65.35px;width:400px;text-align:center;letter-spacing:-0.6px;">109.279</div>
<div class="t" style="top:240.11px;font-size:12px;line-height:15px;left:114.90px;width:400px;text-align:center;letter-spacing:-0.6px;">220.677</div>
<div class="t" style="top:388.37px;font-size:12px;line-height:15px;left:164.45px;width:400px;text-align:center;letter-spacing:-0.6px;">85.588</div>
<div class="t" style="top:437.38px;font-size:12px;line-height:15px;left:214.10px;width:400px;text-align:center;letter-spacing:-0.6px;">40.926</div>
<div class="t" style="top:413.03px;font-size:12px;line-height:15px;left:263.15px;width:400px;text-align:center;letter-spacing:-0.6px;">63.119</div>
<div class="t" style="top:430.37px;font-size:12px;line-height:15px;left:312.60px;width:400px;text-align:center;letter-spacing:-0.6px;">47.315</div>
<div class="t" style="top:481.11px;font-size:12px;line-height:15px;left:361.60px;width:400px;text-align:center;letter-spacing:-0.6px;">1.082</div>
<div class="t" style="top:16.70px;font-size:11px;line-height:14px;left:66.00px;width:400px;text-align:center;font-weight:700;">Cost</div>
<div class="t" style="top:37.20px;font-size:11px;line-height:14px;left:234.00px;letter-spacing:-0.15px;">Budgeted Total</div>
<div class="t" style="top:57.20px;font-size:11px;line-height:14px;left:234.00px;letter-spacing:-0.3px;">Remaining Total</div>
<div class="t" style="top:501.20px;font-size:11px;line-height:14px;left:-175.20px;width:400px;text-align:center;">Dec</div>
<div class="t" style="top:501.20px;font-size:11px;line-height:14px;left:-125.50px;width:400px;text-align:center;">Jan</div>
<div class="t" style="top:501.20px;font-size:11px;line-height:14px;left:-78.15px;width:400px;text-align:center;">Feb</div>
<div class="t" style="top:501.20px;font-size:11px;line-height:14px;left:-30.55px;width:400px;text-align:center;">Mar</div>
<div class="t" style="top:501.20px;font-size:11px;line-height:14px;left:18.45px;width:400px;text-align:center;">Apr</div>
<div class="t" style="top:501.20px;font-size:11px;line-height:14px;left:67.35px;width:400px;text-align:center;">May</div>
<div class="t" style="top:501.20px;font-size:11px;line-height:14px;left:116.90px;width:400px;text-align:center;">Jun</div>
<div class="t" style="top:501.20px;font-size:11px;line-height:14px;left:166.45px;width:400px;text-align:center;">Jul</div>
<div class="t" style="top:501.20px;font-size:11px;line-height:14px;left:216.10px;width:400px;text-align:center;">Aug</div>
<div class="t" style="top:501.20px;font-size:11px;line-height:14px;left:265.15px;width:400px;text-align:center;">Sep</div>
<div class="t" style="top:501.20px;font-size:11px;line-height:14px;left:314.60px;width:400px;text-align:center;">Oct</div>
<div class="t" style="top:501.20px;font-size:11px;line-height:14px;left:363.60px;width:400px;text-align:center;">Nov</div>
<div class="t" style="top:501.20px;font-size:11px;line-height:14px;left:412.60px;width:400px;text-align:center;">Dec</div>
<div class="t" style="top:501.20px;font-size:11px;line-height:14px;left:462.30px;width:400px;text-align:center;">Jan</div>
<div class="t" style="top:517.20px;font-size:11px;line-height:14px;left:143.00px;width:400px;text-align:center;">2029</div>
</div>
<div class="lay" style="left:0px;top:0px;width:1937px;height:1103px">
<svg width="1937" height="1103" viewBox="0 0 1937 1103" shape-rendering="crispEdges"><rect x="96.5" y="48.5" width="23" height="22" rx="3" fill="#cce8ff" stroke="#99d1ff"/><rect x="358.5" y="48.5" width="23" height="22" rx="3" fill="#cce8ff" stroke="#99d1ff"/><g transform="translate(6,52)" shape-rendering="auto"><rect x="4" y="1" width="8" height="5" fill="#e4f0fb" stroke="#5b9bd5"/><rect x="0.5" y="5.5" width="15" height="7" rx="2" fill="#b8b8b8" stroke="#8a8a8a"/><rect x="4" y="10" width="8" height="5" fill="#fff" stroke="#5b9bd5"/><rect x="6" y="12" width="4" height="1" fill="#777"/></g><g transform="translate(30,52)" shape-rendering="auto"><rect x="3" y="1" width="6" height="4" fill="#e4f0fb" stroke="#5b9bd5"/><rect x="0.5" y="4.5" width="11" height="6" rx="2" fill="#b8b8b8" stroke="#8a8a8a"/><circle cx="9.5" cy="10" r="3.5" fill="#eef6ff" stroke="#666"/><path d="M12 12.5 L15 15.5" stroke="#e8a33a" stroke-width="2"/></g><g transform="translate(76,52)" shape-rendering="auto"><rect x="0.5" y="1.5" width="15" height="14" fill="#fff" stroke="#9fb4dc"/><rect x="1" y="1" width="15" height="2" fill="#7a9be0"/><path d="M1 6.5h15M1 9.5h15M1 12.5h15M5.5 3v12M10.5 3v12" stroke="#9fb4dc"/><path d="M1 15.5h15M15.5 2v14" stroke="#55627a"/></g><g transform="translate(101,53)" shape-rendering="auto"><rect x="0.5" y="0.5" width="15" height="15" fill="#eef3fb" stroke="#4a5670"/><rect x="1" y="1" width="15" height="2" fill="#6d8fd8"/><rect x="2" y="5" width="6" height="1.5" fill="#208020"/><rect x="7" y="8" width="5" height="1.5" fill="#3a64d0"/><rect x="11" y="8" width="4" height="1.5" fill="#e02020"/><rect x="5" y="11" width="5" height="1.5" fill="#3a64d0"/></g><g transform="translate(124,52)" shape-rendering="auto"><rect x="0.5" y="0.5" width="5" height="3" rx="1.5" fill="#fff" stroke="#5b9bd5"/><rect x="0.5" y="6.5" width="5" height="3" rx="1.5" fill="#fff" stroke="#5b9bd5"/><rect x="0.5" y="12.5" width="5" height="3" rx="1.5" fill="#fff" stroke="#5b9bd5"/><rect x="10.5" y="6.5" width="5" height="3" rx="1.5" fill="#fff" stroke="#5b9bd5"/><path d="M6 2h2v12h-2M8 8h2.5" fill="none" stroke="#5b9bd5"/></g><g transform="translate(148,52)" shape-rendering="auto"><rect x="0.5" y="0.5" width="3" height="6" rx="1" fill="#6ec25a" stroke="#3d8a2c"/><path d="M3 4h2v6h4" fill="none" stroke="#333" stroke-width="1.2"/><path d="M8 7l3 3l-3 3z" fill="#333"/><rect x="11.5" y="8.5" width="4" height="7" rx="1" fill="#6ec25a" stroke="#3d8a2c"/></g><g transform="translate(172,52)" shape-rendering="auto"><rect x="6.5" y="0.5" width="3" height="4" fill="#eee" stroke="#ccc"/><path d="M8 5v3M2 8h12M2 8v2M8 8v2M14 8v2" stroke="#ccc"/><rect x="0.5" y="10.5" width="3" height="4" fill="#eee" stroke="#ccc"/><rect x="6.5" y="10.5" width="3" height="4" fill="#eee" stroke="#ccc"/><rect x="12.5" y="10.5" width="3" height="4" fill="#eee" stroke="#ccc"/></g><g transform="translate(218,52)" shape-rendering="auto"><path d="M0.5 0.5h8l3 3v11h-11z" fill="#f4f8fc" stroke="#6f8fc8"/><path d="M2 4h5M2 6h4M2 8h3M2 10h3" stroke="#9ab"/><circle cx="8" cy="9" r="4" fill="#eaf2fb" stroke="#6f8fc8"/><path d="M6 11l2-5l2 5M7 9.5h2" fill="none" stroke="#2f5fb0"/><path d="M11 12l3 3" stroke="#e8a33a" stroke-width="2.2"/></g><g transform="translate(242,52)" shape-rendering="auto"><rect x="0.5" y="0.5" width="13" height="13" fill="#f4f4f8" stroke="#555"/><path d="M1 3.5h13M1 7h13M5 1v13M9 1v13" stroke="#aab"/><rect x="3.5" y="9.5" width="12" height="5" fill="#6ec25a" stroke="#333"/></g><g transform="translate(266,52)" shape-rendering="auto"><rect x="0.5" y="0.5" width="3" height="14" fill="#c8c8f4" stroke="#555"/><rect x="6.5" y="3.5" width="3" height="11" fill="#c8c8f4" stroke="#555"/><rect x="10.5" y="7.5" width="3" height="7" fill="#c8c8f4" stroke="#555"/><rect x="2.5" y="9.5" width="13" height="5" fill="#6ec25a" stroke="#333"/></g><g transform="translate(290,52)" shape-rendering="auto"><rect x="0.5" y="0.5" width="12" height="13" fill="#f0f0f4" stroke="#666"/><path d="M1 3.5h12M4 1v13" stroke="#aab"/><circle cx="10" cy="6" r="3.3" fill="#e8c8a0" stroke="#777"/><path d="M9 2.5a3 3 0 0 1 4 1" stroke="#666" stroke-width="1.5"/><path d="M4 15c1-4 11-4 12 0z" fill="#3a8fd0"/></g><g transform="translate(314,52)" shape-rendering="auto"><rect x="0" y="0" width="3" height="8" fill="#e03030"/><rect x="0" y="8" width="3" height="7" fill="#3060d0"/><rect x="5" y="0" width="3" height="6" fill="#e03030"/><circle cx="10" cy="6" r="3.3" fill="#e8c8a0" stroke="#777"/><path d="M9 2.5a3 3 0 0 1 4 1" stroke="#666" stroke-width="1.5"/><path d="M4 15c1-4 11-4 12 0z" fill="#3a8fd0"/></g><g transform="translate(339,52)" shape-rendering="auto"><path d="M1 1l3 3M4 1.5v3h-3" fill="none" stroke="#333"/><rect x="0.5" y="5.5" width="11" height="6" rx="1" fill="#eee" stroke="#888"/><path d="M7 14c3 1 6 0 8-2M13 11.5h2.5v2.5" fill="none" stroke="#e03030" stroke-width="1.2"/></g><g transform="translate(362,54)" shape-rendering="auto"><path d="M2 0h12l-6 5z" fill="#f0e060" stroke="#333"/><rect x="0.5" y="7.5" width="15" height="8" fill="#ddd" stroke="#000" stroke-width="1.5"/><rect x="3" y="10" width="4" height="3" fill="#f0e040"/><rect x="9" y="10" width="4" height="3" fill="#f0e040"/></g><g transform="translate(408,53)" shape-rendering="auto"><rect x="0.5" y="0.5" width="15" height="3" fill="#5a7ee0" stroke="#333"/><rect x="0.5" y="5.5" width="12" height="3" fill="#5ad060" stroke="#333"/><rect x="0.5" y="10.5" width="8" height="3" fill="#f0f060" stroke="#333"/></g><g transform="translate(434,52)" shape-rendering="auto"><rect x="0.5" y="1.5" width="12" height="13" fill="#dfeafa" stroke="#8eaee0"/><path d="M4.5 2v12M8.5 2v12" stroke="#8eaee0"/></g><g transform="translate(466,52)" shape-rendering="auto"><rect x="0.5" y="1.5" width="15" height="12" fill="#fff" stroke="#7a8fb8"/><rect x="1" y="2" width="14" height="2" fill="#a8c0f0"/><path d="M1 7h14M1 10h14M4 4v10M8 4v10M12 4v10" stroke="#ccd"/><rect x="3.5" y="6.5" width="9" height="3" fill="#f0c040" stroke="#c08020"/></g><g transform="translate(491,52)" shape-rendering="auto"><path d="M0.5 2.5h14l-5 6v6h-4v-6z" fill="#8fc0ef" stroke="#4a86c8"/></g><g transform="translate(525,52)" shape-rendering="auto"><rect x="0.5" y="1.5" width="14" height="12" fill="#fff" stroke="#6a9ad8"/><rect x="3.5" y="5.5" width="11" height="8" fill="#eef4fc" stroke="#6a9ad8"/><rect x="1" y="2" width="13" height="1.5" fill="#a8c6f0"/></g><g transform="translate(560,52)" shape-rendering="auto"><path d="M6 1v13M11 1v13M3 5h11M3 10h11" stroke="#5b9bd5" stroke-width="1.1"/></g><g transform="translate(613,52)" shape-rendering="auto"><circle cx="7" cy="7" r="6.2" fill="#eaf2fb" stroke="#d04040" stroke-width="1.3"/><path d="M7 3v4l-2 2" fill="none" stroke="#333"/><path d="M10 8l6 4l-6 4z" fill="#40b040"/></g><g transform="translate(637,52)" shape-rendering="auto"><rect x="0.5" y="2.5" width="5" height="5" fill="#6ec25a" stroke="#3a7a2a"/><rect x="11.5" y="0.5" width="3" height="4" fill="#8fd0ff" stroke="#3a6ab0"/><path d="M1 8l14-3" stroke="#a08050" stroke-width="1.3"/><path d="M8 7l-3 6h6z" fill="#f0c890" stroke="#a08050"/></g><g transform="translate(661,52)" shape-rendering="auto"><path d="M1 3l6-2l4 5l-5 4z" fill="#a8c4ec" stroke="#6f8fc8"/><ellipse cx="9" cy="9" rx="3.5" ry="3" fill="#f8f060" stroke="#999"/><path d="M8 12l6 3l1-4" fill="#f8f0b0"/></g><g transform="translate(687,52)" shape-rendering="auto"><rect x="5" y="0" width="1.6" height="16" fill="#2020e0"/><path d="M8 1l-6 4l8 5l-8 4" fill="none" stroke="#d02020" stroke-width="1.1"/></g><g transform="translate(709,52)" shape-rendering="auto"><rect x="0.5" y="0.5" width="8" height="7" rx="1" fill="#5aa0e0" stroke="#3070b0"/><rect x="7.5" y="0.5" width="6" height="7" rx="1" fill="#70c060" stroke="#3a8a2a"/><rect x="2.5" y="6.5" width="13" height="9" fill="#e8eef8" stroke="#555"/><path d="M8 6v6M6 10l2 2l2-2" stroke="#222" fill="none" stroke-width="1.2"/><rect x="7" y="12" width="3" height="3" fill="#f0c040"/></g><g transform="translate(733,52)" shape-rendering="auto"><rect x="0.5" y="2.5" width="15" height="9" fill="#e8ecf4" stroke="#8a9ab8"/><rect x="3" y="3" width="1.2" height="8" fill="#333"/><path d="M6.5 6.5h9M6.5 6.5v5M9.5 8.5h6M9.5 8.5v3" fill="none" stroke="#8a9ab8"/></g><g transform="translate(794,52)" shape-rendering="auto"><circle cx="6" cy="6" r="5.3" fill="#eef7fb" stroke="#777" stroke-width="1.2"/><path d="M3.5 6h5M6 3.5v5" stroke="#2f4f9f" stroke-width="1.6"/><path d="M10 10l4.5 4.5" stroke="#e0b040" stroke-width="2.4"/></g><g transform="translate(818,52)" shape-rendering="auto"><circle cx="6" cy="6" r="5.3" fill="#eefafb" stroke="#777" stroke-width="1.2"/><path d="M3.5 6h5" stroke="#2f4f9f" stroke-width="1.6"/><path d="M10 10l4.5 4.5" stroke="#e0b040" stroke-width="2.4"/></g><g transform="translate(842,52)" shape-rendering="auto"><circle cx="6" cy="6" r="5.3" fill="#fafafa" stroke="#d0d0d0" stroke-width="1.2"/><path d="M4 4h4v4h-4z" fill="none" stroke="#d8d8d8"/><path d="M10 10l4.5 4.5" stroke="#e4e4e4" stroke-width="2.4"/></g><g transform="translate(866,52)" shape-rendering="auto"><path d="M2.5 0.5h3v2.5h2.5v3h-2.5v2.5h-3v-2.5h-2.5v-3h2.5z" fill="#fff" stroke="#333"/><path d="M10.5 7.5h3v2.5h2.5v3h-2.5v2.5h-3v-2.5h-2.5v-3h2.5z" fill="#fff" stroke="#333"/></g><g transform="translate(890,52)" shape-rendering="auto"><rect x="0.5" y="3.5" width="7" height="3" fill="#fff" stroke="#333"/><rect x="8.5" y="10.5" width="7" height="3" fill="#fff" stroke="#333"/></g><g transform="translate(914,53)" shape-rendering="auto"><path d="M0 5h4l10-5v14l-10-4h-4z" fill="#5aa8c8"/><path d="M5 10l1 4h2l-1-3" fill="none" stroke="#5aa8c8" stroke-width="1.3"/></g><path d="M53 65 h6 l-3 3 z" fill="#000" shape-rendering="auto"/><path d="M195 65 h6 l-3 3 z" fill="#000" shape-rendering="auto"/><path d="M385 65 h6 l-3 3 z" fill="#000" shape-rendering="auto"/><path d="M451 58 h6 l-3 3 z" fill="#000" shape-rendering="auto"/><path d="M509 58 h6 l-3 3 z" fill="#000" shape-rendering="auto"/><path d="M543 58 h6 l-3 3 z" fill="#000" shape-rendering="auto"/><path d="M581 65 h6 l-3 3 z" fill="#000" shape-rendering="auto"/><path d="M756 65 h6 l-3 3 z" fill="#000" shape-rendering="auto"/><path d="M937 65 h6 l-3 3 z" fill="#000" shape-rendering="auto"/><g transform="translate(6,80)" shape-rendering="auto"><path d="M0.5 3.5h5l1 1.5h8v9h-14z" fill="#d8e0ea" stroke="#8a9ab0"/><path d="M11.5 8.5v6M8.5 11.5h6" stroke="#667" stroke-width="1.3"/><rect x="9" y="9" width="5" height="5" fill="none"/></g><g transform="translate(6,102)" shape-rendering="auto"><path d="M0.5 2.5h5l1 1.5h7v9h-13z" fill="#c8d4e4" stroke="#8a9ab0"/><path d="M2 7h13l-2 7h-12z" fill="#e0e8f2" stroke="#8a9ab0"/><path d="M9 4c2-2 4-2 6 0l-2 1" stroke="#e0a020" stroke-width="1.6" fill="none"/></g><g transform="translate(6,126)" shape-rendering="auto"><rect x="0.5" y="7.5" width="11" height="7" fill="#dde4ee" stroke="#aab"/><path d="M7 1h6v7l-3-2l-3 2z" fill="#f0c050" stroke="#a07020"/></g><g transform="translate(6,175)" shape-rendering="auto"><path d="M0.5 3.5h5l1 1.5h8v9h-14z" fill="#d8e0ea" stroke="#8a9ab0"/></g><g transform="translate(6,198)" shape-rendering="auto"><circle cx="8" cy="5" r="3.6" fill="#e8c8a0" stroke="#666"/><path d="M5 2.5a3.5 3 0 0 1 6 0" stroke="#555" stroke-width="1.8"/><path d="M1 15c1-5 13-5 14 0z" fill="#3a8fd0"/></g><g transform="translate(6,222)" shape-rendering="auto"><rect x="2.5" y="0.5" width="12" height="15" fill="#eef4fc" stroke="#5a8ad0"/><path d="M5 4h7M5 7h7M5 10h7" stroke="#5a8ad0"/><path d="M1 3h3M1 8h3M1 13h3" stroke="#5a8ad0"/></g><g transform="translate(6,247)" shape-rendering="auto"><rect x="0.5" y="0.5" width="15" height="15" fill="#fff" stroke="#555"/><rect x="3" y="9" width="2" height="5" fill="#3070d0"/><rect x="7" y="7" width="2" height="7" fill="#40b040"/><rect x="11" y="5" width="2" height="9" fill="#3070d0"/><path d="M2 9l4-4l3 3l5-5" stroke="#e03030" fill="none"/></g><g transform="translate(6,294)" shape-rendering="auto"><rect x="0.5" y="4.5" width="15" height="7" rx="2" fill="#6ec25a" stroke="#3d8a2c"/></g><g transform="translate(6,316)" shape-rendering="auto"><rect x="0.5" y="5.5" width="13" height="7" rx="2" fill="#6ec25a" stroke="#3d8a2c"/><path d="M12 2c2-1 4 1 2 3l-2 2h3" fill="none" stroke="#e09020" stroke-width="1.2"/></g><g transform="translate(6,342)" shape-rendering="auto"><rect x="0" y="0" width="10" height="9" fill="#3a70d0"/><rect x="5" y="6" width="11" height="10" fill="#2a50b0" stroke="#fff" stroke-width="0.8"/></g><g transform="translate(6,365)" shape-rendering="auto"><rect x="0.5" y="0.5" width="10" height="7" rx="1.5" fill="#6ec25a" stroke="#3d8a2c"/><circle cx="9" cy="7" r="3.3" fill="#e8c8a0" stroke="#666"/><path d="M3 16c1-5 11-5 12 0z" fill="#3a8fd0"/></g><g transform="translate(6,391)" shape-rendering="auto"><path d="M2.5 0.5h8l3 3v12h-11z" fill="#fff" stroke="#6f8fc8"/><path d="M4.5 6h7M4.5 8.5h7M4.5 11h7" stroke="#9ab"/></g><g transform="translate(6,414)" shape-rendering="auto"><rect x="2.5" y="0.5" width="11" height="15" fill="#f4f4f4" stroke="#666"/><rect x="4" y="2" width="8" height="3" fill="#cde"/><path d="M5 7.5h1M8 7.5h1M11 7.5h1M5 10h1M8 10h1M11 10h1M5 12.5h1M8 12.5h1M11 12.5h1" stroke="#444" stroke-width="1.4"/></g><g transform="translate(6,438)" shape-rendering="auto"><path d="M3 4l6-3l6 3v8l-6 3l-6-3z" fill="#d04040" stroke="#a02020"/><path d="M3 4l6 3l6-3M9 7v8" stroke="#f0a0a0" fill="none"/></g><path d="M5 151 v6 l-3 -3 z" fill="#000" shape-rendering="auto"/><path d="M5 270 v6 l-3 -3 z" fill="#000" shape-rendering="auto"/><path d="M5 461 v6 l-3 -3 z" fill="#000" shape-rendering="auto"/><g transform="translate(1898,80)" shape-rendering="auto"><path d="M6.5 1.5h3v5h5v3h-5v5h-3v-5h-5v-3h5z" fill="#fff" stroke="#2f6fa8" stroke-width="1.2"/></g><g transform="translate(1898,103)" shape-rendering="auto"><path d="M2 2L14 14M14 2L2 14" stroke="#e05030" stroke-width="3.2"/><path d="M2 2L14 14M14 2L2 14" stroke="#f08060" stroke-width="1"/></g><g transform="translate(1898,128)" shape-rendering="auto"><path d="M9 1v9M13 1l-5 9" stroke="#aab" stroke-width="1.2"/><circle cx="5" cy="12" r="2.5" fill="none" stroke="#5a5ae0" stroke-width="1.6"/><circle cx="10" cy="13" r="2.5" fill="none" stroke="#5a5ae0" stroke-width="1.6"/></g><g transform="translate(1898,152)" shape-rendering="auto"><path d="M0.5 1.5h6l2 2v8h-8z" fill="#dde6fb" stroke="#4a6ad8"/><path d="M6.5 5.5h6l2 2v8h-8z" fill="#dde6fb" stroke="#4a6ad8"/><path d="M8 10h5M8 12h5" stroke="#4a6ad8"/></g><g transform="translate(1898,176)" shape-rendering="auto"><rect x="0.5" y="2.5" width="11" height="13" fill="#eee" stroke="#ccc"/><rect x="3.5" y="0.5" width="5" height="3" fill="#eee" stroke="#ccc"/><path d="M7.5 7.5h5l2 2v6h-7z" fill="#f6f6f6" stroke="#ccc"/></g><g transform="translate(1898,222)" shape-rendering="auto"><circle cx="7" cy="5" r="3.4" fill="#e8c8a0" stroke="#666"/><path d="M0 15c1-5 12-5 13 0z" fill="#3a8fd0"/><path d="M9 5v10l2-2l2 3l1-1l-2-3h3z" fill="#fff" stroke="#333" stroke-width="0.8"/></g><g transform="translate(1898,247)" shape-rendering="auto"><circle cx="5" cy="5" r="3.4" fill="#e8c8a0" stroke="#666"/><circle cx="11" cy="5" r="3.4" fill="#ddd" stroke="#999"/><path d="M0 15c1-5 12-5 13 0z" fill="#3a8fd0"/><path d="M9 5v10l2-2l2 3l1-1l-2-3h3z" fill="#fff" stroke="#333" stroke-width="0.8"/></g><g transform="translate(1898,270)" shape-rendering="auto"><circle cx="7" cy="5" r="3.4" fill="#ddd" stroke="#999"/><path d="M0 15c1-5 12-5 13 0z" fill="#50b040"/><path d="M9 5v10l2-2l2 3l1-1l-2-3h3z" fill="#fff" stroke="#333" stroke-width="0.8"/></g><g transform="translate(1898,295)" shape-rendering="auto"><rect x="0.5" y="3.5" width="10" height="7" rx="2" fill="#6ec25a" stroke="#3d8a2c"/><path d="M5 10l3 4l3-3z" fill="#f0e060"/><path d="M9 1v10l2-2l2 3l1-1l-2-3h3z" fill="#fff" stroke="#333" stroke-width="0.8"/></g><g transform="translate(1898,320)" shape-rendering="auto"><path d="M1 1h4v3" fill="none" stroke="#333"/><rect x="0.5" y="6.5" width="10" height="7" rx="2" fill="#6ec25a" stroke="#3d8a2c"/><path d="M9 2v10l2-2l2 3l1-1l-2-3h3z" fill="#fff" stroke="#333" stroke-width="0.8"/></g><g transform="translate(1898,342)" shape-rendering="auto"><rect x="0.5" y="3.5" width="10" height="7" rx="2" fill="#6ec25a" stroke="#3d8a2c"/><path d="M8 11v3h5" fill="none" stroke="#333"/><path d="M9 1v10l2-2l2 3l1-1l-2-3h3z" fill="#fff" stroke="#333" stroke-width="0.8"/></g><g transform="translate(1898,368)" shape-rendering="auto"><rect x="0.5" y="0.5" width="15" height="15" fill="#f6e0c0" stroke="#5a8ad0"/><path d="M1 15V10h5V6h4V2h5v13z" fill="#e8a860"/><rect x="2" y="2" width="6" height="2" fill="#a8c6f0"/></g><g transform="translate(1898,414)" shape-rendering="auto"><path d="M8 1l7 7h-4v7h-6v-7h-4z" fill="#f2f2f2" stroke="#d8d8d8"/></g><g transform="translate(1898,438)" shape-rendering="auto"><path d="M8 15l7-7h-4v-7h-6v7h-4z" fill="#f2f2f2" stroke="#d8d8d8"/></g><g transform="translate(1898,463)" shape-rendering="auto"><path d="M1 8l7-7v4h7v6h-7v4z" fill="#f2f2f2" stroke="#d8d8d8"/></g><g transform="translate(1898,487)" shape-rendering="auto"><path d="M15 8l-7-7v4h-7v6h7v4z" fill="#f2f2f2" stroke="#d8d8d8"/></g><path d="M1901 198 v6 l-3 -3 z" fill="#000" shape-rendering="auto"/><path d="M1901 389 v6 l-3 -3 z" fill="#000" shape-rendering="auto"/><path d="M1901 509 v6 l-3 -3 z" fill="#000" shape-rendering="auto"/><rect x="0" y="1059" width="1921" height="1" fill="#a0a0a0" /><rect x="96" y="1062" width="75" height="1" fill="#a0a0a0" /><rect x="96" y="1062" width="1" height="16" fill="#a0a0a0" /><rect x="96" y="1077" width="75" height="1" fill="#ffffff" /><rect x="171" y="1062" width="1" height="16" fill="#ffffff" /><rect x="174" y="1062" width="160" height="1" fill="#a0a0a0" /><rect x="174" y="1062" width="1" height="16" fill="#a0a0a0" /><rect x="174" y="1077" width="160" height="1" fill="#ffffff" /><rect x="334" y="1062" width="1" height="16" fill="#ffffff" /><rect x="337" y="1062" width="124" height="1" fill="#a0a0a0" /><rect x="337" y="1062" width="1" height="16" fill="#a0a0a0" /><rect x="337" y="1077" width="124" height="1" fill="#ffffff" /><rect x="461" y="1062" width="1" height="16" fill="#ffffff" /><rect x="464" y="1062" width="145" height="1" fill="#a0a0a0" /><rect x="464" y="1062" width="1" height="16" fill="#a0a0a0" /><rect x="464" y="1077" width="145" height="1" fill="#ffffff" /><rect x="609" y="1062" width="1" height="16" fill="#ffffff" /><rect x="612" y="1062" width="207" height="1" fill="#a0a0a0" /><rect x="612" y="1062" width="1" height="16" fill="#a0a0a0" /><rect x="612" y="1077" width="207" height="1" fill="#ffffff" /><rect x="819" y="1062" width="1" height="16" fill="#ffffff" /><rect x="822" y="1062" width="74" height="1" fill="#a0a0a0" /><rect x="822" y="1062" width="1" height="16" fill="#a0a0a0" /><rect x="822" y="1077" width="74" height="1" fill="#ffffff" /><rect x="896" y="1062" width="1" height="16" fill="#ffffff" /><rect x="899" y="1062" width="391" height="1" fill="#a0a0a0" /><rect x="899" y="1062" width="1" height="16" fill="#a0a0a0" /><rect x="899" y="1077" width="391" height="1" fill="#ffffff" /><rect x="1290" y="1062" width="1" height="16" fill="#ffffff" /><rect x="1293" y="1062" width="100" height="1" fill="#a0a0a0" /><rect x="1293" y="1062" width="1" height="16" fill="#a0a0a0" /><rect x="1293" y="1077" width="100" height="1" fill="#ffffff" /><rect x="1393" y="1062" width="1" height="16" fill="#ffffff" /><rect x="1396" y="1062" width="509" height="1" fill="#a0a0a0" /><rect x="1396" y="1062" width="1" height="16" fill="#a0a0a0" /><rect x="1396" y="1077" width="509" height="1" fill="#ffffff" /><rect x="1905" y="1062" width="1" height="16" fill="#ffffff" /><path d="M1908 1077 L1918 1067 M1912 1077 L1918 1071 M1916 1077 L1918 1075" stroke="#999" stroke-width="1" shape-rendering="auto"/></svg>
<div class="t" style="top:1062.70px;font-size:12px;line-height:15px;left:176.00px;">Portfolio: AKIM Muhendislik</div>
<div class="t" style="top:1062.70px;font-size:12px;line-height:15px;left:338.50px;">Access Mode: Shared</div>
<div class="t" style="top:1062.70px;font-size:12px;line-height:15px;left:466.00px;">Data Date: 01-Jan-29</div>
<div class="t" style="top:1062.70px;font-size:12px;line-height:15px;left:614.00px;">Baseline: Current Project</div>
<div class="t" style="top:1062.70px;font-size:12px;line-height:15px;left:824.00px;">User: admin</div>
<div class="t" style="top:1062.70px;font-size:12px;line-height:15px;left:902.00px;">DB: AKIM-Mühendislik-Primavera-Egitim-ilhan-Bozdeniz- (Professional)</div>
</div>
</body></html>
